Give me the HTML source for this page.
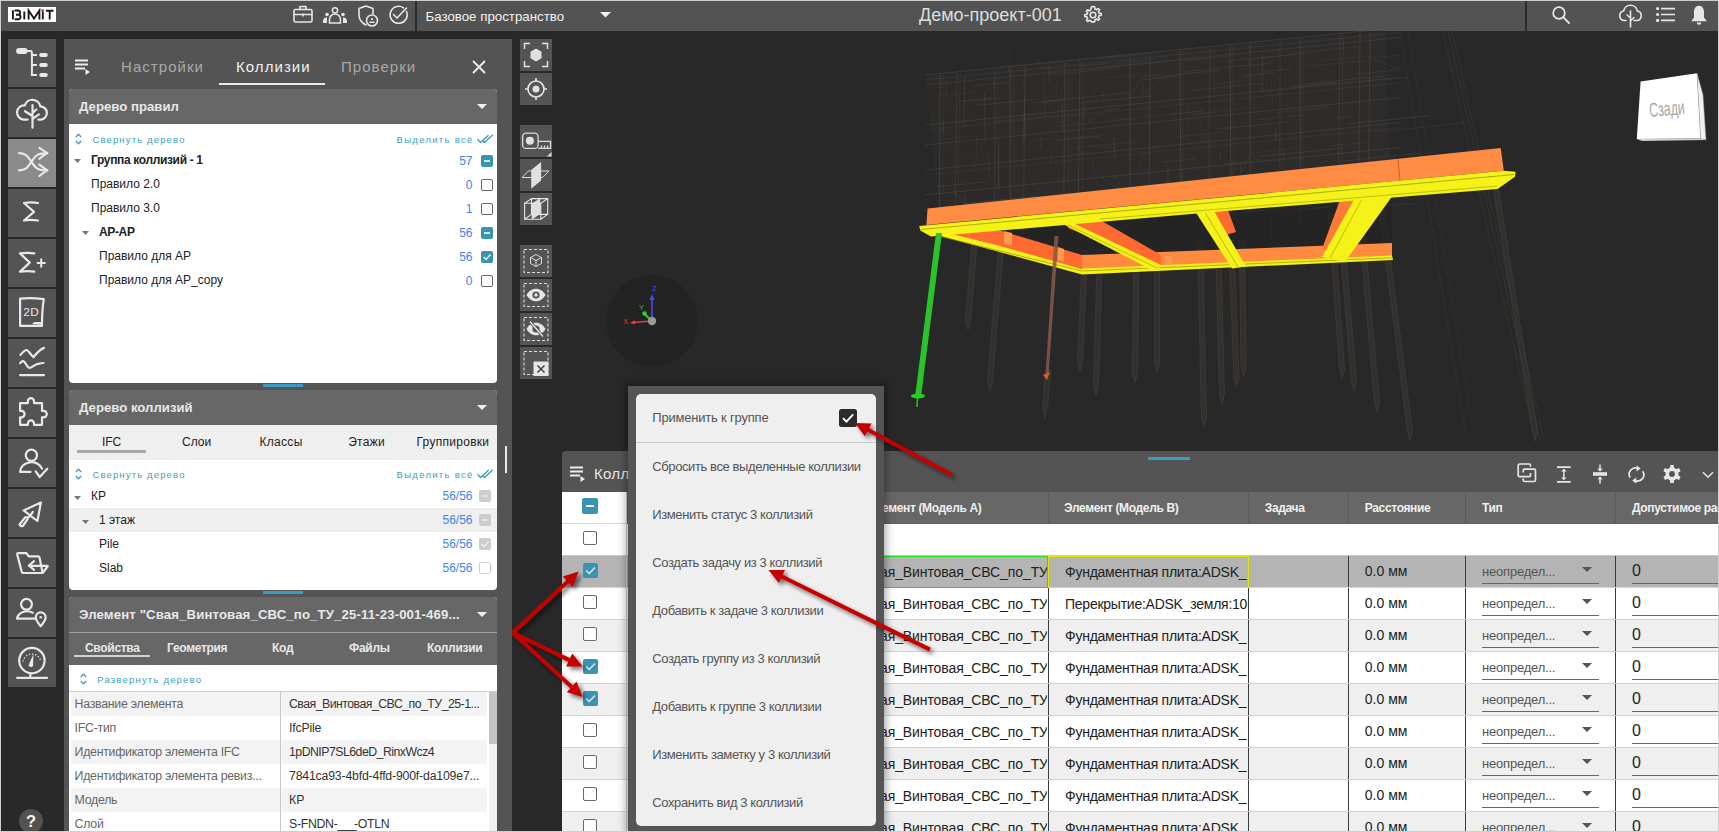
<!DOCTYPE html><html><head><meta charset="utf-8"><style>
html,body{margin:0;padding:0;}
body{width:1719px;height:832px;position:relative;overflow:hidden;background:#282828;font-family:"Liberation Sans",sans-serif;}
.t{position:absolute;white-space:nowrap;font-family:"Liberation Sans",sans-serif;}
svg{overflow:visible}
</style></head><body>
<div style="position:absolute;left:0px;top:0px;width:1719px;height:31px;background:#535353;"></div>
<div style="position:absolute;left:8px;top:7px;width:48px;height:15px;background:#fff;"></div>
<svg style="position:absolute;left:8px;top:7px;" width="48" height="15" viewBox="0 0 48 15"><g stroke="#1a1a1a" stroke-width="1.9" fill="none"><path d="M4.9 3.2V12.4"/><path d="M6.6 3.5H10.5A2.2 2.2 0 0 1 10.5 7.8H8M10.8 7.8A2.3 2.3 0 0 1 10.8 12.3H6.6"/><path d="M16.3 4.5V12.4"/><path d="M20.6 12.4V3.5L26 11.5L31.4 3.5V12.4"/><path d="M34.8 4.6V12.4"/><path d="M38 3.7H45.5M41.7 3.7V12.4"/></g><rect x="33.4" y="2.4" width="2.4" height="2.2" fill="#ee0000"/></svg>
<svg style="position:absolute;left:293px;top:5px;" width="20" height="18" viewBox="0 0 20 18"><rect x="1" y="4.5" width="18" height="12.5" rx="1.5" stroke="#e6e6e6" fill="none" stroke-width="1.6" stroke-linecap="round" stroke-linejoin="round"/><path d="M7 4.5V1.5h6v3M1 9.5h18M10 9v2" stroke="#e6e6e6" fill="none" stroke-width="1.6" stroke-linecap="round" stroke-linejoin="round"/></svg>
<svg style="position:absolute;left:323px;top:7px;" width="24" height="16" viewBox="0 0 24 16"><circle cx="12" cy="3.3" r="2.6" stroke="#e6e6e6" stroke-width="1.5" fill="none"/><circle cx="4" cy="7.5" r="1.8" fill="#e6e6e6"/><circle cx="20" cy="7.5" r="1.8" fill="#e6e6e6"/><path d="M6.5 16v-3.5a5.5 5.5 0 0 1 11 0V16z" stroke="#e6e6e6" stroke-width="1.5" fill="none"/><path d="M0 16v-2a3.5 3.5 0 0 1 4-3.5V16zM24 16v-2a3.5 3.5 0 0 0-4-3.5V16z" fill="#e6e6e6"/></svg>
<svg style="position:absolute;left:357px;top:5px;" width="22" height="22" viewBox="0 0 22 22"><path d="M9 1 L16 3.5 V9 M9 1 L2 3.5 V10 C2 15 5 18 9 20" stroke="#e6e6e6" fill="none" stroke-width="1.6" stroke-linecap="round" stroke-linejoin="round"/><circle cx="15" cy="15.5" r="5.5" stroke="#e6e6e6" fill="none" stroke-width="1.6" stroke-linecap="round" stroke-linejoin="round"/><circle cx="15" cy="14" r="1.1" fill="#e6e6e6"/><path d="M13 17.2h4" stroke="#e6e6e6" fill="none" stroke-width="1.6" stroke-linecap="round" stroke-linejoin="round"/></svg>
<svg style="position:absolute;left:389px;top:5px;" width="20" height="20" viewBox="0 0 20 20"><path d="M17.5 6.5 A8.5 8.5 0 1 1 14.5 2.8" stroke="#e6e6e6" fill="none" stroke-width="1.6" stroke-linecap="round" stroke-linejoin="round"/><path d="M4.5 9.5 L8 13 L17.5 3" stroke="#e6e6e6" fill="none" stroke-width="1.6" stroke-linecap="round" stroke-linejoin="round"/></svg>
<div style="position:absolute;left:415px;top:1px;width:2px;height:30px;background:#2a2a2a;"></div>
<div class="t" style="left:425.5px;top:10.24px;font-size:13.3px;line-height:13.3px;color:#f2f2f2;font-weight:400;letter-spacing:0px;">Базовое пространство</div>
<svg style="position:absolute;left:600px;top:12px;" width="11" height="6" viewBox="0 0 11 6"><path d="M0 0h11L5.5 5.5z" fill="#f2f2f2"/></svg>
<div class="t" style="left:919px;top:5.96px;font-size:18px;line-height:18px;color:#dedede;font-weight:400;letter-spacing:0px;">Демо-проект-001</div>
<svg style="position:absolute;left:1083px;top:5px;" width="20" height="20" viewBox="0 0 20 20"><path d="M10 1.5l1.6.3.4 2.2 1.5.7 1.9-1.2 1.2 1.2-1.2 1.9.7 1.5 2.2.4v1.7l-2.2.4-.7 1.5 1.2 1.9-1.2 1.2-1.9-1.2-1.5.7-.4 2.2H8.4L8 16l-1.5-.7-1.9 1.2-1.2-1.2 1.2-1.9-.7-1.5-2.2-.4V9.8l2.2-.4.7-1.5-1.2-1.9 1.2-1.2 1.9 1.2L8 4.2l.4-2.2z" fill="none" stroke="#e6e6e6" stroke-width="1.6" stroke-linejoin="round"/><circle cx="10" cy="10" r="2.8" fill="none" stroke="#e6e6e6" stroke-width="1.6"/></svg>
<div style="position:absolute;left:1525px;top:1px;width:2px;height:30px;background:#2a2a2a;"></div>
<svg style="position:absolute;left:1552px;top:6px;" width="18" height="18" viewBox="0 0 18 18"><circle cx="7" cy="7" r="5.8" stroke="#e6e6e6" stroke-width="1.8" fill="none"/><path d="M11.2 11.2 L17 17" stroke="#e6e6e6" stroke-width="1.8" stroke-linecap="round"/></svg>
<svg style="position:absolute;left:1619px;top:3px;" width="24" height="24" viewBox="0 0 24 24"><path d="M7 17.5 H5.5 A4.8 4.8 0 0 1 4.6 8 A7 7 0 0 1 18.4 8 A4.8 4.8 0 0 1 17.5 17.5 H15" stroke="#e6e6e6" fill="none" stroke-width="1.6" stroke-linecap="round" stroke-linejoin="round"/><path d="M11.5 8 V24 M11.5 15 L8 12 M11.5 18 L15 14.5" stroke="#e6e6e6" fill="none" stroke-width="1.6" stroke-linecap="round" stroke-linejoin="round"/></svg>
<svg style="position:absolute;left:1656px;top:7px;" width="19" height="15" viewBox="0 0 19 15"><circle cx="1.6" cy="1.6" r="1.6" fill="#e6e6e6"/><circle cx="1.6" cy="7.5" r="1.6" fill="#e6e6e6"/><circle cx="1.6" cy="13.4" r="1.6" fill="#e6e6e6"/><path d="M5 1.6h14M5 7.5h14M5 13.4h14" stroke="#e6e6e6" stroke-width="1.6"/></svg>
<svg style="position:absolute;left:1691px;top:5px;" width="16" height="20" viewBox="0 0 16 20"><path d="M8 0.8 C11.5 0.8 13 4 13 7 V12.5 L15.8 16.2 H0.2 L3 12.5 V7 C3 4 4.5 0.8 8 0.8z" fill="#e6e6e6"/><path d="M5.8 17.5 a2.2 2.2 0 0 0 4.4 0z" fill="#e6e6e6"/></svg>
<div style="position:absolute;left:0px;top:0px;width:1719px;height:1px;background:#cfcfcf;"></div>
<div style="position:absolute;left:8px;top:39px;width:48px;height:48px;background:#545454;"></div>
<svg style="position:absolute;left:8px;top:39px;" width="48" height="48" viewBox="0 0 48 48"><rect x="8.1" y="8.9" width="11.5" height="6.1" rx="3" fill="#e8e8e8"/><path d="M19 11.9h3.5a1.4 1.4 0 0 1 1.4 1.4V36.1h5M23.9 15.9h5M23.9 26h5" stroke="#e8e8e8" stroke-width="2" fill="none"/><rect x="31.2" y="13.9" width="8.6" height="4" rx="2" fill="#e8e8e8"/><rect x="31.2" y="24" width="8.6" height="4" rx="2" fill="#e8e8e8"/><rect x="31.2" y="34.1" width="8.6" height="4" rx="2" fill="#e8e8e8"/></svg>
<div style="position:absolute;left:8px;top:89px;width:48px;height:48px;background:#545454;"></div>
<svg style="position:absolute;left:8px;top:89px;" width="48" height="48" viewBox="0 0 48 48"><path d="M19.6 30.6 H15.5 A7 7 0 0 1 16.8 16.4 A8 8 0 0 1 32.3 17.3 A6.7 6.7 0 0 1 33.3 30.6 H30.3" stroke="#e8e8e8" fill="none" stroke-width="2.2" stroke-linecap="round" stroke-linejoin="round"/><path d="M24.5 16.2 V38.7 M17 22.2 L24.5 27 M24.5 24 L28.3 20.5 M24.5 30 L30.9 25.4" stroke="#e8e8e8" fill="none" stroke-width="2.2" stroke-linecap="round" stroke-linejoin="round"/></svg>
<div style="position:absolute;left:8px;top:139px;width:48px;height:48px;background:#8a8a8a;"></div>
<svg style="position:absolute;left:8px;top:139px;" width="48" height="48" viewBox="0 0 48 48"><path d="M11 14.1 C18 14.1 19.5 17 23.4 22.8 C27.3 28.6 29 31.4 39.3 31.4 M11 31.4 C18 31.4 19.5 28.6 23.4 22.8 C27.3 17 29 14.1 39.3 14.1 M31.4 8.9 Q35.5 12 39.5 14.1 Q35.5 16 31.4 19.8 M31.4 25.7 Q35.5 29 39.5 31.4 Q35.5 33.5 31.4 37" stroke="#e8e8e8" fill="none" stroke-width="2.2" stroke-linecap="round" stroke-linejoin="round"/></svg>
<div style="position:absolute;left:8px;top:189px;width:48px;height:48px;background:#545454;"></div>
<svg style="position:absolute;left:8px;top:189px;" width="48" height="48" viewBox="0 0 48 48"><path d="M16 14 Q23 12.9 30 14 M16 14 L26 22.8 L16 31.5 M16 31.5 Q23 30.4 30 31.5" stroke="#e8e8e8" fill="none" stroke-width="2.2" stroke-linecap="round" stroke-linejoin="round" stroke-width="3"/></svg>
<div style="position:absolute;left:8px;top:239px;width:48px;height:48px;background:#545454;"></div>
<svg style="position:absolute;left:8px;top:239px;" width="48" height="48" viewBox="0 0 48 48"><path d="M12 14.4 Q19.2 13.3 26.3 14.4 M12 14.4 L21.8 23.6 L12 32.6 M12 32.6 Q19.2 31.5 26.3 32.6" stroke="#e8e8e8" fill="none" stroke-width="2.2" stroke-linecap="round" stroke-linejoin="round" stroke-width="3"/><path d="M28.8 23.9h8.8M33.2 19.6v8.8" stroke="#e8e8e8" stroke-width="2" fill="none"/></svg>
<div style="position:absolute;left:8px;top:289px;width:48px;height:48px;background:#545454;"></div>
<svg style="position:absolute;left:8px;top:289px;" width="48" height="48" viewBox="0 0 48 48"><path d="M12.1 9.6 Q24 8.4 35.8 10.2 Q34 20 34 36.8 H12.1 Z" stroke="#e8e8e8" fill="none" stroke-width="2.2" stroke-linecap="round" stroke-linejoin="round"/><path d="M24.3 35.2 Q25 33 27 33 H33.5 V35.8 Z" fill="#e8e8e8"/><text x="23.2" y="26.8" font-family="Liberation Sans" font-size="11.8" fill="#e8e8e8" text-anchor="middle" letter-spacing="0.3">2D</text></svg>
<div style="position:absolute;left:8px;top:339px;width:48px;height:48px;background:#545454;"></div>
<svg style="position:absolute;left:8px;top:339px;" width="48" height="48" viewBox="0 0 48 48"><path d="M12.4 15.9 C15 13 17 11 18.5 11 C20 11 23 16 25.4 18.2 C28 15 32 10 36.1 8.9 M12.1 24.2 C13 23 14 22.2 15.3 22.2 C17 22.2 19.5 28.9 21.3 28.9 C23.5 28.9 27 25.2 30 24.8 C32 24.4 34 24.1 35.5 24 M12.1 36.1 H36" stroke="#e8e8e8" fill="none" stroke-width="2.2" stroke-linecap="round" stroke-linejoin="round"/></svg>
<div style="position:absolute;left:8px;top:389px;width:48px;height:48px;background:#545454;"></div>
<svg style="position:absolute;left:8px;top:389px;" width="48" height="48" viewBox="0 0 48 48"><path d="M12.1 14.1 H19.9 V12.2 a3.05 3.05 0 0 1 6.1 0 V14.1 H34 V21.9 H35.6 a3.2 3.2 0 0 1 0 6.4 H34 V35.8 H26 V34.4 a3.05 3.05 0 0 0 -6.1 0 V35.8 H12.1 V28.3 H13.4 a3.2 3.2 0 0 0 0 -6.4 H12.1 Z" stroke="#e8e8e8" fill="none" stroke-width="2.2" stroke-linecap="round" stroke-linejoin="round"/></svg>
<div style="position:absolute;left:8px;top:439px;width:48px;height:48px;background:#545454;"></div>
<svg style="position:absolute;left:8px;top:439px;" width="48" height="48" viewBox="0 0 48 48"><circle cx="23.4" cy="16.2" r="5.6" stroke="#e8e8e8" fill="none" stroke-width="2.2" stroke-linecap="round" stroke-linejoin="round"/><path d="M12.1 32.9 A11.3 10 0 0 1 34 29.7 M12.1 32.9 H22.5" stroke="#e8e8e8" fill="none" stroke-width="2.2" stroke-linecap="round" stroke-linejoin="round"/><path d="M27.7 32.3 L31.7 38 L39.3 29.7" stroke="#e8e8e8" fill="none" stroke-width="2.2" stroke-linecap="round" stroke-linejoin="round" stroke-width="3.2"/></svg>
<div style="position:absolute;left:8px;top:489px;width:48px;height:48px;background:#545454;"></div>
<svg style="position:absolute;left:8px;top:489px;" width="48" height="48" viewBox="0 0 48 48"><path d="M15.6 21.4 L32.9 13.6 L29.4 32 Z M24.8 22.8 L21.9 27.1 Q20 28.8 17.3 28.3 L11.5 35.5 A2.4 2.4 0 0 0 14.8 37 L19.8 29.8" stroke="#e8e8e8" fill="none" stroke-width="2.2" stroke-linecap="round" stroke-linejoin="round" stroke-width="2"/></svg>
<div style="position:absolute;left:8px;top:539px;width:48px;height:48px;background:#545454;"></div>
<svg style="position:absolute;left:8px;top:539px;" width="48" height="48" viewBox="0 0 48 48"><path d="M10 14.1 H18.3 L20.8 17.4 H30.4 Q31 17.5 31.5 18.5 L34.6 33.8 M10 14.1 Q9 14.3 9.2 15.5 L13.8 33 Q14.3 34 15.3 34 H34.6 L39.6 27.5 Q40 26.8 39 26.8 H21" stroke="#e8e8e8" fill="none" stroke-width="2.2" stroke-linecap="round" stroke-linejoin="round"/><path d="M26 22.2 L21 26.5 L26 30.9" stroke="#e8e8e8" fill="none" stroke-width="2.2" stroke-linecap="round" stroke-linejoin="round"/></svg>
<div style="position:absolute;left:8px;top:589px;width:48px;height:48px;background:#545454;"></div>
<svg style="position:absolute;left:8px;top:589px;" width="48" height="48" viewBox="0 0 48 48"><circle cx="18.5" cy="15.3" r="5.4" stroke="#e8e8e8" fill="none" stroke-width="2.2" stroke-linecap="round" stroke-linejoin="round"/><path d="M8.9 29.7 A10.5 9 0 0 1 24.8 23.7 M8.9 29.7 H27" stroke="#e8e8e8" fill="none" stroke-width="2.2" stroke-linecap="round" stroke-linejoin="round"/><path d="M32.7 37.2 C29.5 33.5 27.8 31 27.8 28.3 A4.9 4.9 0 0 1 37.6 28.3 C37.6 31 35.9 33.5 32.7 37.2 Z" stroke="#e8e8e8" fill="none" stroke-width="2.2" stroke-linecap="round" stroke-linejoin="round"/><circle cx="32.7" cy="28.2" r="1.3" fill="#e8e8e8"/></svg>
<div style="position:absolute;left:8px;top:639px;width:48px;height:48px;background:#545454;"></div>
<svg style="position:absolute;left:8px;top:639px;" width="48" height="48" viewBox="0 0 48 48"><circle cx="23.9" cy="21.6" r="12.7" stroke="#e8e8e8" fill="none" stroke-width="2.2" stroke-linecap="round" stroke-linejoin="round"/><path d="M9.2 38.9 H39 M22.3 34 V38.5" stroke="#e8e8e8" fill="none" stroke-width="2.2" stroke-linecap="round" stroke-linejoin="round"/><path d="M25.4 15.3 L20.6 26 A2.4 2.4 0 0 0 25.1 26.8 Z" fill="#e8e8e8"/><path d="M15.1 22.5 A9 9 0 0 1 32.6 21.5" stroke="#e8e8e8" stroke-width="1.2" stroke-dasharray="1.3 1.8" fill="none"/></svg>
<div style="position:absolute;left:19px;top:809px;width:24px;height:24px;border-radius:12px;background:#525252"></div>
<div class="t" style="left:21.0px;width:20px;text-align:center;top:813.03px;font-size:16.5px;line-height:16.5px;color:#f4f4f4;font-weight:700;letter-spacing:0px;">?</div>
<div style="position:absolute;left:64px;top:39px;width:448px;height:793px;background:#545454;"></div>
<svg style="position:absolute;left:74px;top:59px;" width="20" height="16" viewBox="0 0 20 16"><path d="M1 1.5h13M1 5.5h13M1 9.5h10" stroke="#ececec" stroke-width="1.8"/><path d="M11.5 10v6l4.5-3z" fill="#ececec"/></svg>
<div class="t" style="left:121px;top:59.30px;font-size:15px;line-height:15px;color:#a9a9a9;font-weight:400;letter-spacing:1.05px;">Настройки</div>
<div class="t" style="left:236px;top:59.30px;font-size:15px;line-height:15px;color:#f0f0f0;font-weight:400;letter-spacing:1.05px;">Коллизии</div>
<div class="t" style="left:341px;top:59.30px;font-size:15px;line-height:15px;color:#a9a9a9;font-weight:400;letter-spacing:1.05px;">Проверки</div>
<div style="position:absolute;left:219px;top:83px;width:106px;height:2px;background:#e8e8e8;"></div>
<svg style="position:absolute;left:472px;top:60px;" width="14" height="14" viewBox="0 0 14 14"><path d="M1 1L13 13M13 1L1 13" stroke="#f0f0f0" stroke-width="1.8"/></svg>
<div style="position:absolute;left:69px;top:89px;width:428px;height:294px;border-radius:4px;background:#fff;overflow:hidden"></div>
<div style="position:absolute;left:69px;top:89px;width:428px;height:35px;border-radius:4px 4px 0 0;background:#676767"></div>
<div class="t" style="left:79px;top:99.53px;font-size:13.2px;line-height:13.2px;color:#e8e8e8;font-weight:700;letter-spacing:0px;">Дерево правил</div>
<svg style="position:absolute;left:477px;top:104px;" width="10" height="5" viewBox="0 0 10 5"><path d="M0 0h10L5.0 5z" fill="#f0f0f0"/></svg>
<svg style="position:absolute;left:75px;top:133px;" width="7" height="12" viewBox="0 0 7 12"><path d="M0.8 4L3.5 1.2 6.2 4M0.8 8L3.5 10.8 6.2 8" stroke="#3d9ec4" stroke-width="1.3" fill="none"/></svg>
<div class="t" style="left:92.4px;top:134.96px;font-size:9.5px;line-height:9.5px;color:#3d9ec4;font-weight:400;letter-spacing:1.15px;">Свернуть дерево</div>
<div class="t" style="left:273.6px;width:200px;text-align:right;top:134.96px;font-size:9.5px;line-height:9.5px;color:#3d9ec4;font-weight:400;letter-spacing:1.3px;">Выделить всё</div>
<svg style="position:absolute;left:476px;top:133px;" width="18" height="10" viewBox="0 0 18 10"><path d="M1.5 6.3L4.5 9.5 12.5 2.2M6 7.3L8.3 9.5 16.8 1.8" stroke="#3d9ec4" stroke-width="1.4" fill="none"/></svg>
<svg style="position:absolute;left:74px;top:158.9px;" width="7" height="4" viewBox="0 0 7 4"><path d="M0 0h7L3.5 4z" fill="#777"/></svg>
<div class="t" style="left:91px;top:154.04px;font-size:12px;line-height:12px;color:#222;font-weight:700;letter-spacing:-0.35px;">Группа коллизий - 1</div>
<div class="t" style="left:372.5px;width:100px;text-align:right;top:154.54px;font-size:12px;line-height:12px;color:#4282f2;font-weight:400;letter-spacing:0px;">57</div>
<div style="position:absolute;left:481px;top:154.9px;width:12px;height:12px;border-radius:2px;background:#3a93b0"></div>
<div style="position:absolute;left:484px;top:159.9px;width:6px;height:2px;background:#d8e8ee;"></div>
<div class="t" style="left:91px;top:178.04px;font-size:12px;line-height:12px;color:#222;font-weight:400;letter-spacing:0px;">Правило 2.0</div>
<div class="t" style="left:372.5px;width:100px;text-align:right;top:178.54px;font-size:12px;line-height:12px;color:#4282f2;font-weight:400;letter-spacing:0px;">0</div>
<div style="position:absolute;left:481px;top:178.9px;width:10px;height:10px;border-radius:2px;border:1px solid #666;background:#fff"></div>
<div class="t" style="left:91px;top:202.04px;font-size:12px;line-height:12px;color:#222;font-weight:400;letter-spacing:0px;">Правило 3.0</div>
<div class="t" style="left:372.5px;width:100px;text-align:right;top:202.54px;font-size:12px;line-height:12px;color:#4282f2;font-weight:400;letter-spacing:0px;">1</div>
<div style="position:absolute;left:481px;top:202.9px;width:10px;height:10px;border-radius:2px;border:1px solid #666;background:#fff"></div>
<svg style="position:absolute;left:82px;top:230.9px;" width="7" height="4" viewBox="0 0 7 4"><path d="M0 0h7L3.5 4z" fill="#777"/></svg>
<div class="t" style="left:99px;top:226.04px;font-size:12px;line-height:12px;color:#222;font-weight:700;letter-spacing:-0.35px;">АР-АР</div>
<div class="t" style="left:372.5px;width:100px;text-align:right;top:226.54px;font-size:12px;line-height:12px;color:#4282f2;font-weight:400;letter-spacing:0px;">56</div>
<div style="position:absolute;left:481px;top:226.9px;width:12px;height:12px;border-radius:2px;background:#3a93b0"></div>
<div style="position:absolute;left:484px;top:231.9px;width:6px;height:2px;background:#d8e8ee;"></div>
<div class="t" style="left:99px;top:250.04px;font-size:12px;line-height:12px;color:#222;font-weight:400;letter-spacing:0px;">Правило для АР</div>
<div class="t" style="left:372.5px;width:100px;text-align:right;top:250.54px;font-size:12px;line-height:12px;color:#4282f2;font-weight:400;letter-spacing:0px;">56</div>
<div style="position:absolute;left:481px;top:250.89999999999998px;width:12px;height:12px;border-radius:2px;background:#3a93b0"></div>
<svg style="position:absolute;left:481px;top:250.89999999999998px;" width="12" height="12" viewBox="0 0 12 12"><path d="M2.64 6.0L5.04 8.399999999999999L9.600000000000001 3.5999999999999996" stroke="#e8f2f5" stroke-width="1.5" fill="none"/></svg>
<div class="t" style="left:99px;top:274.04px;font-size:12px;line-height:12px;color:#222;font-weight:400;letter-spacing:0px;">Правило для АР_copy</div>
<div class="t" style="left:372.5px;width:100px;text-align:right;top:274.54px;font-size:12px;line-height:12px;color:#4282f2;font-weight:400;letter-spacing:0px;">0</div>
<div style="position:absolute;left:481px;top:274.9px;width:10px;height:10px;border-radius:2px;border:1px solid #666;background:#fff"></div>
<div style="position:absolute;left:263px;top:384px;width:40px;height:3px;background:#3a9cc0;"></div>
<div style="position:absolute;left:69px;top:390px;width:428px;height:200px;border-radius:4px;background:#fff;overflow:hidden"></div>
<div style="position:absolute;left:69px;top:390px;width:428px;height:35px;border-radius:4px 4px 0 0;background:#676767"></div>
<div class="t" style="left:79px;top:400.53px;font-size:13.2px;line-height:13.2px;color:#e8e8e8;font-weight:700;letter-spacing:0px;">Дерево коллизий</div>
<svg style="position:absolute;left:477px;top:405px;" width="10" height="5" viewBox="0 0 10 5"><path d="M0 0h10L5.0 5z" fill="#f0f0f0"/></svg>
<div style="position:absolute;left:69px;top:425px;width:428px;height:35px;background:#efefef;"></div>
<div class="t" style="left:101.9px;top:435.84px;font-size:12px;line-height:12px;color:#222;font-weight:400;letter-spacing:0px;">IFC</div>
<div class="t" style="left:182px;top:435.84px;font-size:12px;line-height:12px;color:#222;font-weight:400;letter-spacing:0px;">Слои</div>
<div class="t" style="left:259.5px;top:435.84px;font-size:12px;line-height:12px;color:#222;font-weight:400;letter-spacing:0.3px;">Классы</div>
<div class="t" style="left:348.2px;top:435.84px;font-size:12px;line-height:12px;color:#222;font-weight:400;letter-spacing:0.3px;">Этажи</div>
<div class="t" style="left:416.5px;top:435.84px;font-size:12px;line-height:12px;color:#222;font-weight:400;letter-spacing:0.28px;">Группировки</div>
<div style="position:absolute;left:77px;top:450px;width:69px;height:2.5px;background:#a8a8a8;"></div>
<svg style="position:absolute;left:75px;top:468px;" width="7" height="12" viewBox="0 0 7 12"><path d="M0.8 4L3.5 1.2 6.2 4M0.8 8L3.5 10.8 6.2 8" stroke="#3d9ec4" stroke-width="1.3" fill="none"/></svg>
<div class="t" style="left:92.4px;top:469.96px;font-size:9.5px;line-height:9.5px;color:#3d9ec4;font-weight:400;letter-spacing:1.15px;">Свернуть дерево</div>
<div class="t" style="left:273.6px;width:200px;text-align:right;top:469.96px;font-size:9.5px;line-height:9.5px;color:#3d9ec4;font-weight:400;letter-spacing:1.3px;">Выделить всё</div>
<svg style="position:absolute;left:476px;top:468px;" width="18" height="10" viewBox="0 0 18 10"><path d="M1.5 6.3L4.5 9.5 12.5 2.2M6 7.3L8.3 9.5 16.8 1.8" stroke="#3d9ec4" stroke-width="1.4" fill="none"/></svg>
<div style="position:absolute;left:69px;top:508px;width:428px;height:24px;background:#efefef;"></div>
<svg style="position:absolute;left:74px;top:495.5px;" width="7" height="4" viewBox="0 0 7 4"><path d="M0 0h7L3.5 4z" fill="#777"/></svg>
<div class="t" style="left:91px;top:489.84px;font-size:12px;line-height:12px;color:#222;font-weight:400;letter-spacing:0px;">КР</div>
<div class="t" style="left:372.5px;width:100px;text-align:right;top:490.34px;font-size:12px;line-height:12px;color:#4282f2;font-weight:400;letter-spacing:0px;">56/56</div>
<div style="position:absolute;left:479px;top:490px;width:12px;height:12px;border-radius:2px;background:#cdcdcd"></div>
<div style="position:absolute;left:482px;top:495.0px;width:6px;height:2px;background:#d8e8ee;"></div>
<svg style="position:absolute;left:82px;top:519.5px;" width="7" height="4" viewBox="0 0 7 4"><path d="M0 0h7L3.5 4z" fill="#777"/></svg>
<div class="t" style="left:99px;top:513.84px;font-size:12px;line-height:12px;color:#222;font-weight:400;letter-spacing:0px;">1 этаж</div>
<div class="t" style="left:372.5px;width:100px;text-align:right;top:514.34px;font-size:12px;line-height:12px;color:#4282f2;font-weight:400;letter-spacing:0px;">56/56</div>
<div style="position:absolute;left:479px;top:514px;width:12px;height:12px;border-radius:2px;background:#cdcdcd"></div>
<div style="position:absolute;left:482px;top:519.0px;width:6px;height:2px;background:#d8e8ee;"></div>
<div class="t" style="left:99px;top:537.84px;font-size:12px;line-height:12px;color:#222;font-weight:400;letter-spacing:0px;">Pile</div>
<div class="t" style="left:372.5px;width:100px;text-align:right;top:538.34px;font-size:12px;line-height:12px;color:#4282f2;font-weight:400;letter-spacing:0px;">56/56</div>
<div style="position:absolute;left:479px;top:538px;width:12px;height:12px;border-radius:2px;background:#cdcdcd"></div>
<svg style="position:absolute;left:479px;top:538px;" width="12" height="12" viewBox="0 0 12 12"><path d="M2.64 6.0L5.04 8.399999999999999L9.600000000000001 3.5999999999999996" stroke="#e8f2f5" stroke-width="1.5" fill="none"/></svg>
<div class="t" style="left:99px;top:561.84px;font-size:12px;line-height:12px;color:#222;font-weight:400;letter-spacing:0px;">Slab</div>
<div class="t" style="left:372.5px;width:100px;text-align:right;top:562.34px;font-size:12px;line-height:12px;color:#4282f2;font-weight:400;letter-spacing:0px;">56/56</div>
<div style="position:absolute;left:479px;top:562px;width:10px;height:10px;border-radius:2px;border:1px solid #cdcdcd;background:#fff"></div>
<div style="position:absolute;left:263px;top:591px;width:40px;height:3px;background:#3a9cc0;"></div>
<div style="position:absolute;left:69px;top:597px;width:428px;height:240px;border-radius:4px 4px 0 0;background:#fff;overflow:hidden"></div>
<div style="position:absolute;left:69px;top:597px;width:428px;height:68px;border-radius:4px 4px 0 0;background:#676767"></div>
<div style="position:absolute;left:69px;top:632px;width:428px;height:1px;background:#a0a0a0;"></div>
<div class="t" style="left:79px;top:608.03px;font-size:13.2px;line-height:13.2px;color:#e8e8e8;font-weight:700;letter-spacing:0.13px;">Элемент "Свая_Винтовая_СВС_по_ТУ_25-11-23-001-469...</div>
<svg style="position:absolute;left:477px;top:612px;" width="10" height="5" viewBox="0 0 10 5"><path d="M0 0h10L5.0 5z" fill="#f0f0f0"/></svg>
<div class="t" style="left:85px;top:641.84px;font-size:12px;line-height:12px;color:#e8e8e8;font-weight:700;letter-spacing:-0.3px;">Свойства</div>
<div class="t" style="left:167px;top:641.84px;font-size:12px;line-height:12px;color:#e8e8e8;font-weight:700;letter-spacing:-0.3px;">Геометрия</div>
<div class="t" style="left:272px;top:641.84px;font-size:12px;line-height:12px;color:#e8e8e8;font-weight:700;letter-spacing:-0.3px;">Код</div>
<div class="t" style="left:349px;top:641.84px;font-size:12px;line-height:12px;color:#e8e8e8;font-weight:700;letter-spacing:-0.3px;">Файлы</div>
<div class="t" style="left:427px;top:641.84px;font-size:12px;line-height:12px;color:#e8e8e8;font-weight:700;letter-spacing:-0.3px;">Коллизии</div>
<div style="position:absolute;left:74px;top:655px;width:76px;height:2px;background:#d0d0d0;"></div>
<svg style="position:absolute;left:80px;top:673px;" width="7" height="12" viewBox="0 0 7 12"><path d="M0.8 4L3.5 1.2 6.2 4M0.8 8L3.5 10.8 6.2 8" stroke="#3d9ec4" stroke-width="1.3" fill="none"/></svg>
<div class="t" style="left:97.2px;top:675.36px;font-size:9.5px;line-height:9.5px;color:#3d9ec4;font-weight:400;letter-spacing:1.2px;">Развернуть дерево</div>
<div style="position:absolute;left:69px;top:691px;width:428px;height:1px;background:#cfcfcf;"></div>
<div style="position:absolute;left:71px;top:692px;width:416px;height:24px;background:#f3f3f3;"></div>
<div class="t" style="left:74.6px;top:697.59px;font-size:12.3px;line-height:12.3px;color:#666;font-weight:400;letter-spacing:-0.25px;">Название элемента</div>
<div class="t" style="left:289px;top:697.59px;font-size:12.3px;line-height:12.3px;color:#333;font-weight:400;letter-spacing:-0.52px;">Свая_Винтовая_СВС_по_ТУ_25-1...</div>
<div class="t" style="left:74.6px;top:721.59px;font-size:12.3px;line-height:12.3px;color:#666;font-weight:400;letter-spacing:-0.25px;">IFC-тип</div>
<div class="t" style="left:289px;top:721.59px;font-size:12.3px;line-height:12.3px;color:#333;font-weight:400;letter-spacing:-0.2px;">IfcPile</div>
<div style="position:absolute;left:71px;top:740px;width:416px;height:24px;background:#f3f3f3;"></div>
<div class="t" style="left:74.6px;top:745.59px;font-size:12.3px;line-height:12.3px;color:#666;font-weight:400;letter-spacing:-0.25px;">Идентификатор элемента IFC</div>
<div class="t" style="left:289px;top:745.59px;font-size:12.3px;line-height:12.3px;color:#333;font-weight:400;letter-spacing:-0.52px;">1pDNIP7SL6deD_RinxWcz4</div>
<div class="t" style="left:74.6px;top:769.59px;font-size:12.3px;line-height:12.3px;color:#666;font-weight:400;letter-spacing:-0.25px;">Идентификатор элемента ревиз...</div>
<div class="t" style="left:289px;top:769.59px;font-size:12.3px;line-height:12.3px;color:#333;font-weight:400;letter-spacing:-0.19px;">7841ca93-4bfd-4ffd-900f-da109e7...</div>
<div style="position:absolute;left:71px;top:788px;width:416px;height:24px;background:#f3f3f3;"></div>
<div class="t" style="left:74.6px;top:793.59px;font-size:12.3px;line-height:12.3px;color:#666;font-weight:400;letter-spacing:-0.25px;">Модель</div>
<div class="t" style="left:289px;top:793.59px;font-size:12.3px;line-height:12.3px;color:#333;font-weight:400;letter-spacing:0px;">КР</div>
<div class="t" style="left:74.6px;top:817.59px;font-size:12.3px;line-height:12.3px;color:#666;font-weight:400;letter-spacing:-0.25px;">Слой</div>
<div class="t" style="left:289px;top:817.59px;font-size:12.3px;line-height:12.3px;color:#333;font-weight:400;letter-spacing:-0.3px;">S-FNDN-<span style="letter-spacing:-2.7px">____</span>-OTLN</div>
<div style="position:absolute;left:280px;top:692px;width:1px;height:140px;background:#c8c8c8;"></div>
<div style="position:absolute;left:489px;top:692px;width:8px;height:140px;background:#f1f1f1;"></div>
<div style="position:absolute;left:489px;top:692px;width:8px;height:52px;background:#c4c4c4;"></div>
<svg style="position:absolute;left:0;top:0" width="1719" height="832" viewBox="0 0 1719 832"><g><path d="M925 76 L1385 31 L1392 205 L940 222 Z" fill="#2d2c2b" fill-opacity="0.7"/><path d="M1000 65 L1385 31 L1390 190 L1010 215 Z" fill="#302e2c" fill-opacity="0.5"/><path d="M925.0 75.0L1400.0 27.5" stroke="#5a5652" stroke-opacity="0.55" stroke-width="0.8"/><path d="M925.0 80.0L1400.0 32.5" stroke="#5a5652" stroke-opacity="0.3" stroke-width="0.8"/><path d="M925.0 85.0L1400.0 37.5" stroke="#5a5652" stroke-opacity="0.4" stroke-width="0.8"/><path d="M925.0 125.0L1400.0 77.5" stroke="#5a5652" stroke-opacity="0.45" stroke-width="0.8"/><path d="M925.0 130.0L1400.0 82.5" stroke="#5a5652" stroke-opacity="0.25" stroke-width="0.8"/><path d="M925.0 145.0L1400.0 97.5" stroke="#5a5652" stroke-opacity="0.4" stroke-width="0.8"/><path d="M925.0 170.0L1400.0 122.5" stroke="#5a5652" stroke-opacity="0.45" stroke-width="0.8"/><path d="M925.0 175.0L1400.0 127.5" stroke="#5a5652" stroke-opacity="0.25" stroke-width="0.8"/><path d="M925.0 195.0L1400.0 147.5" stroke="#5a5652" stroke-opacity="0.45" stroke-width="0.8"/><path d="M925.0 210.0L1400.0 162.5" stroke="#5a5652" stroke-opacity="0.3" stroke-width="0.8"/><path d="M940.0 74.5L939.3 207.6" stroke="#5a5652" stroke-opacity="0.5127336182599634" stroke-width="0.8"/><path d="M943.0 74.5L943.1 195.4" stroke="#5a5652" stroke-opacity="0.22" stroke-width="0.8"/><path d="M957.0 72.8L955.2 213.6" stroke="#5a5652" stroke-opacity="0.35937391461049617" stroke-width="0.8"/><path d="M960.0 72.8L958.3 183.8" stroke="#5a5652" stroke-opacity="0.22" stroke-width="0.8"/><path d="M995.0 69.0L994.7 219.1" stroke="#5a5652" stroke-opacity="0.38095049028741135" stroke-width="0.8"/><path d="M998.0 69.0L998.5 219.8" stroke="#5a5652" stroke-opacity="0.22" stroke-width="0.8"/><path d="M1010.0 67.5L1010.3 211.7" stroke="#5a5652" stroke-opacity="0.5940637763982299" stroke-width="0.8"/><path d="M1013.0 67.5L1014.4 192.2" stroke="#5a5652" stroke-opacity="0.22" stroke-width="0.8"/><path d="M1025.0 66.0L1023.6 207.0" stroke="#5a5652" stroke-opacity="0.42712045602548354" stroke-width="0.8"/><path d="M1065.0 62.0L1063.7 214.9" stroke="#5a5652" stroke-opacity="0.509728367231546" stroke-width="0.8"/><path d="M1068.0 62.0L1068.2 182.6" stroke="#5a5652" stroke-opacity="0.22" stroke-width="0.8"/><path d="M1080.0 60.5L1078.2 208.5" stroke="#5a5652" stroke-opacity="0.5200999932954464" stroke-width="0.8"/><path d="M1083.0 60.5L1082.3 204.6" stroke="#5a5652" stroke-opacity="0.22" stroke-width="0.8"/><path d="M1130.0 55.5L1129.8 210.1" stroke="#5a5652" stroke-opacity="0.5485948703806227" stroke-width="0.8"/><path d="M1150.0 53.5L1149.0 214.8" stroke="#5a5652" stroke-opacity="0.48129912595286284" stroke-width="0.8"/><path d="M1180.0 50.5L1180.9 209.9" stroke="#5a5652" stroke-opacity="0.5950437118731455" stroke-width="0.8"/><path d="M1183.0 50.5L1182.7 211.8" stroke="#5a5652" stroke-opacity="0.22" stroke-width="0.8"/><path d="M1210.0 47.5L1208.6 213.3" stroke="#5a5652" stroke-opacity="0.3598018142618594" stroke-width="0.8"/><path d="M1230.0 45.5L1231.1 214.7" stroke="#5a5652" stroke-opacity="0.5688694529577221" stroke-width="0.8"/><path d="M1233.0 45.5L1233.8 205.0" stroke="#5a5652" stroke-opacity="0.22" stroke-width="0.8"/><path d="M1250.0 43.5L1250.3 212.8" stroke="#5a5652" stroke-opacity="0.5599919451281353" stroke-width="0.8"/><path d="M1280.0 40.5L1279.9 216.3" stroke="#5a5652" stroke-opacity="0.3651673568993049" stroke-width="0.8"/><path d="M1300.0 38.5L1300.6 221.9" stroke="#5a5652" stroke-opacity="0.5554811966524287" stroke-width="0.8"/><path d="M1303.0 38.5L1302.5 208.1" stroke="#5a5652" stroke-opacity="0.22" stroke-width="0.8"/><path d="M1340.0 34.5L1338.1 212.8" stroke="#5a5652" stroke-opacity="0.3920120947266361" stroke-width="0.8"/><path d="M1343.0 34.5L1341.2 212.3" stroke="#5a5652" stroke-opacity="0.22" stroke-width="0.8"/><path d="M1360.0 32.5L1358.5 209.2" stroke="#5a5652" stroke-opacity="0.4477374257833068" stroke-width="0.8"/><path d="M1370.0 31.5L1368.3 212.6" stroke="#5a5652" stroke-opacity="0.4873599772860093" stroke-width="0.8"/><path d="M1307.8 190.9L1353.9 186.3" stroke="#5a5652" stroke-opacity="0.2896927913329062" stroke-width="0.8"/><path d="M1337.3 207.4L1365.5 204.6" stroke="#5a5652" stroke-opacity="0.25798921670488395" stroke-width="0.8"/><path d="M1041.2 137.4L1040.7 147.6" stroke="#5a5652" stroke-opacity="0.304736625281332" stroke-width="0.8"/><path d="M1103.0 147.0L1116.3 147.9" stroke="#5a5652" stroke-opacity="0.24263891241136915" stroke-width="0.8"/><path d="M1242.7 53.5L1262.3 75.9" stroke="#5a5652" stroke-opacity="0.2696809681794849" stroke-width="0.8"/><path d="M1113.5 120.1L1176.1 113.9" stroke="#5a5652" stroke-opacity="0.2155619554046719" stroke-width="0.8"/><path d="M965.6 101.8L1006.1 97.8" stroke="#5a5652" stroke-opacity="0.21314390097256675" stroke-width="0.8"/><path d="M935.1 96.2L977.4 91.9" stroke="#5a5652" stroke-opacity="0.20637522166653643" stroke-width="0.8"/><path d="M1332.8 145.6L1366.7 142.2" stroke="#5a5652" stroke-opacity="0.2868473865134254" stroke-width="0.8"/><path d="M1100.7 77.7L1135.2 75.6" stroke="#5a5652" stroke-opacity="0.2225751984624404" stroke-width="0.8"/><path d="M974.1 85.8L1008.9 82.3" stroke="#5a5652" stroke-opacity="0.4072138445303901" stroke-width="0.8"/><path d="M1008.5 71.1L1010.4 49.9" stroke="#5a5652" stroke-opacity="0.23147586388231714" stroke-width="0.8"/><path d="M947.3 148.4L972.7 160.1" stroke="#5a5652" stroke-opacity="0.18916727958440427" stroke-width="0.8"/><path d="M1101.8 84.5L1104.1 101.2" stroke="#5a5652" stroke-opacity="0.19944974925716435" stroke-width="0.8"/><path d="M1036.5 186.7L1061.2 205.1" stroke="#5a5652" stroke-opacity="0.27274994149880594" stroke-width="0.8"/><path d="M1271.6 80.7L1271.4 91.9" stroke="#5a5652" stroke-opacity="0.20698426885551613" stroke-width="0.8"/><path d="M1062.1 101.9L1063.0 129.8" stroke="#5a5652" stroke-opacity="0.43425530031906057" stroke-width="0.8"/><path d="M1384.6 206.7L1416.1 203.6" stroke="#5a5652" stroke-opacity="0.256711456682682" stroke-width="0.8"/><path d="M1024.5 96.5L1025.3 140.1" stroke="#5a5652" stroke-opacity="0.3198683565653846" stroke-width="0.8"/><path d="M1232.1 181.0L1296.6 174.5" stroke="#5a5652" stroke-opacity="0.42744428438793075" stroke-width="0.8"/><path d="M1290.9 171.1L1290.3 212.7" stroke="#5a5652" stroke-opacity="0.2831292999661525" stroke-width="0.8"/><path d="M1299.4 210.0L1344.5 205.5" stroke="#5a5652" stroke-opacity="0.43669925161622325" stroke-width="0.8"/><path d="M1264.8 71.4L1291.1 68.8" stroke="#5a5652" stroke-opacity="0.42621302393330984" stroke-width="0.8"/><path d="M1302.0 64.1L1335.6 73.6" stroke="#5a5652" stroke-opacity="0.20256112682362543" stroke-width="0.8"/><path d="M1184.6 71.6L1272.5 62.9" stroke="#5a5652" stroke-opacity="0.36241866741845763" stroke-width="0.8"/><path d="M1174.6 204.1L1255.0 196.1" stroke="#5a5652" stroke-opacity="0.4065388129538053" stroke-width="0.8"/><path d="M1031.0 103.1L1064.1 99.8" stroke="#5a5652" stroke-opacity="0.34660929204149044" stroke-width="0.8"/><path d="M1053.0 126.8L1136.3 118.5" stroke="#5a5652" stroke-opacity="0.2884460059883147" stroke-width="0.8"/><path d="M1143.5 148.0L1137.9 173.0" stroke="#5a5652" stroke-opacity="0.22524734116803471" stroke-width="0.8"/><path d="M1177.0 136.8L1225.0 132.0" stroke="#5a5652" stroke-opacity="0.2457769718180497" stroke-width="0.8"/><path d="M936.8 186.8L987.3 181.8" stroke="#5a5652" stroke-opacity="0.3812983176118445" stroke-width="0.8"/><path d="M1188.2 103.6L1188.3 144.9" stroke="#5a5652" stroke-opacity="0.22652735427623208" stroke-width="0.8"/><path d="M1189.9 90.6L1262.9 83.3" stroke="#5a5652" stroke-opacity="0.32692849794808015" stroke-width="0.8"/><path d="M1190.6 175.3L1186.6 182.0" stroke="#5a5652" stroke-opacity="0.22583296962768323" stroke-width="0.8"/><path d="M1168.0 164.8L1168.1 193.9" stroke="#5a5652" stroke-opacity="0.43537528188462515" stroke-width="0.8"/><path d="M1253.1 193.8L1236.3 197.4" stroke="#5a5652" stroke-opacity="0.2914900551020225" stroke-width="0.8"/><path d="M1317.2 61.2L1365.4 56.4" stroke="#5a5652" stroke-opacity="0.21813652491412208" stroke-width="0.8"/><path d="M1044.5 75.1L1045.1 121.0" stroke="#5a5652" stroke-opacity="0.23861165594217304" stroke-width="0.8"/><path d="M1260.8 156.4L1342.0 148.2" stroke="#5a5652" stroke-opacity="0.441886195666596" stroke-width="0.8"/><path d="M1034.9 207.9L1086.5 202.7" stroke="#5a5652" stroke-opacity="0.4474678636860716" stroke-width="0.8"/><path d="M1313.8 65.8L1367.4 60.5" stroke="#5a5652" stroke-opacity="0.284779036084705" stroke-width="0.8"/><path d="M1024.1 113.5L1023.1 145.7" stroke="#5a5652" stroke-opacity="0.3101145254506755" stroke-width="0.8"/><path d="M943.2 120.9L943.3 133.4" stroke="#5a5652" stroke-opacity="0.44627081103352484" stroke-width="0.8"/><path d="M1293.7 210.0L1328.6 206.5" stroke="#5a5652" stroke-opacity="0.20989704747851692" stroke-width="0.8"/><path d="M1289.4 87.0L1336.1 82.3" stroke="#5a5652" stroke-opacity="0.42785345404590225" stroke-width="0.8"/><path d="M1307.6 83.6L1391.6 75.2" stroke="#5a5652" stroke-opacity="0.3426487313483135" stroke-width="0.8"/><path d="M1253.7 58.5L1320.3 51.8" stroke="#5a5652" stroke-opacity="0.3063292601989307" stroke-width="0.8"/><path d="M967.9 206.2L968.6 219.5" stroke="#5a5652" stroke-opacity="0.4140571590930372" stroke-width="0.8"/><path d="M965.3 195.4L965.0 227.5" stroke="#5a5652" stroke-opacity="0.4316673210178068" stroke-width="0.8"/><path d="M1056.9 82.5L1056.4 96.9" stroke="#5a5652" stroke-opacity="0.24036227289940285" stroke-width="0.8"/><path d="M957.9 101.4L995.8 97.6" stroke="#5a5652" stroke-opacity="0.38987456374964036" stroke-width="0.8"/><path d="M1066.9 138.4L1108.0 134.3" stroke="#5a5652" stroke-opacity="0.20454077682364544" stroke-width="0.8"/><path d="M1049.0 65.9L1049.1 83.5" stroke="#5a5652" stroke-opacity="0.3186901596294335" stroke-width="0.8"/><path d="M1360.3 51.9L1355.5 51.6" stroke="#5a5652" stroke-opacity="0.2751920899995334" stroke-width="0.8"/><path d="M1113.9 137.1L1114.8 160.8" stroke="#5a5652" stroke-opacity="0.4080716358161124" stroke-width="0.8"/><path d="M1256.6 152.3L1297.6 148.2" stroke="#5a5652" stroke-opacity="0.21359713419710907" stroke-width="0.8"/><path d="M994.1 79.4L993.6 95.9" stroke="#5a5652" stroke-opacity="0.2211212181769827" stroke-width="0.8"/><path d="M1317.8 191.9L1317.3 211.6" stroke="#5a5652" stroke-opacity="0.2732646231450839" stroke-width="0.8"/><path d="M1144.1 79.4L1178.8 76.0" stroke="#5a5652" stroke-opacity="0.44044663334065337" stroke-width="0.8"/><path d="M1377.5 131.7L1465.0 122.9" stroke="#5a5652" stroke-opacity="0.2773869794194882" stroke-width="0.8"/><path d="M1097.2 58.9L1147.8 53.9" stroke="#5a5652" stroke-opacity="0.3256910015940999" stroke-width="0.8"/><path d="M1026.4 141.1L1061.3 137.7" stroke="#5a5652" stroke-opacity="0.222438349470245" stroke-width="0.8"/><path d="M1116.8 63.4L1154.6 59.6" stroke="#5a5652" stroke-opacity="0.25820239164770153" stroke-width="0.8"/><path d="M1201.4 136.5L1212.5 149.5" stroke="#5a5652" stroke-opacity="0.28186360403510846" stroke-width="0.8"/><path d="M1112.2 108.7L1087.7 122.2" stroke="#5a5652" stroke-opacity="0.2464829174556794" stroke-width="0.8"/><path d="M954.9 191.6L963.8 205.6" stroke="#5a5652" stroke-opacity="0.2718328373568591" stroke-width="0.8"/><path d="M998.4 145.3L999.1 187.5" stroke="#5a5652" stroke-opacity="0.40660228037549506" stroke-width="0.8"/><path d="M1200.7 197.1L1201.1 216.3" stroke="#5a5652" stroke-opacity="0.20779013157237713" stroke-width="0.8"/><path d="M995.6 121.6L1073.2 113.9" stroke="#5a5652" stroke-opacity="0.3396318116239837" stroke-width="0.8"/><path d="M1220.6 152.0L1220.6 162.1" stroke="#5a5652" stroke-opacity="0.3994243880177132" stroke-width="0.8"/><path d="M1275.5 128.5L1275.8 141.1" stroke="#5a5652" stroke-opacity="0.38419708213556264" stroke-width="0.8"/><path d="M1049.7 74.8L1119.4 67.8" stroke="#5a5652" stroke-opacity="0.2513043817705216" stroke-width="0.8"/><path d="M1271.6 210.8L1271.4 239.9" stroke="#5a5652" stroke-opacity="0.3709241406755879" stroke-width="0.8"/><path d="M1284.0 148.0L1283.1 163.9" stroke="#5a5652" stroke-opacity="0.26348507041397384" stroke-width="0.8"/><path d="M1273.2 94.1L1272.2 106.5" stroke="#5a5652" stroke-opacity="0.267193191447312" stroke-width="0.8"/><path d="M1240.8 162.5L1240.3 193.2" stroke="#5a5652" stroke-opacity="0.31616571334357857" stroke-width="0.8"/><path d="M1147.2 72.9L1126.1 101.6" stroke="#5a5652" stroke-opacity="0.2904381511430575" stroke-width="0.8"/><path d="M943.0 138.8L975.7 135.8" stroke="#5a5652" stroke-opacity="0.1902985860260371" stroke-width="0.8"/><path d="M1030.5 206.9L1089.1 201.0" stroke="#5a5652" stroke-opacity="0.2354351694648828" stroke-width="0.8"/><path d="M1173.4 207.3L1250.0 199.6" stroke="#5a5652" stroke-opacity="0.3271860884121952" stroke-width="0.8"/><path d="M1338.5 161.5L1420.9 153.3" stroke="#5a5652" stroke-opacity="0.32153516410678723" stroke-width="0.8"/><path d="M946.3 74.4L946.2 96.5" stroke="#5a5652" stroke-opacity="0.23517680506441965" stroke-width="0.8"/><path d="M1091.5 108.5L1056.6 123.6" stroke="#5a5652" stroke-opacity="0.2758666191975693" stroke-width="0.8"/><path d="M989.6 204.3L990.4 225.9" stroke="#5a5652" stroke-opacity="0.29305549983862295" stroke-width="0.8"/><path d="M1113.8 214.8L1113.5 241.9" stroke="#5a5652" stroke-opacity="0.2687888131556199" stroke-width="0.8"/><path d="M957.0 87.3L942.0 113.4" stroke="#5a5652" stroke-opacity="0.18739870746177278" stroke-width="0.8"/><path d="M1055.9 140.6L1098.9 136.3" stroke="#5a5652" stroke-opacity="0.4390413161884018" stroke-width="0.8"/><path d="M1337.3 181.1L1338.2 228.7" stroke="#5a5652" stroke-opacity="0.33730703704699094" stroke-width="0.8"/><path d="M1262.4 50.8L1262.3 90.9" stroke="#5a5652" stroke-opacity="0.36112267760462846" stroke-width="0.8"/><path d="M1065.2 69.5L1039.1 67.8" stroke="#5a5652" stroke-opacity="0.20154942789868938" stroke-width="0.8"/><path d="M1070.5 174.9L1053.7 184.3" stroke="#5a5652" stroke-opacity="0.1951254436558284" stroke-width="0.8"/><path d="M1188.6 114.9L1215.7 112.1" stroke="#5a5652" stroke-opacity="0.2519681302841842" stroke-width="0.8"/><path d="M1347.2 123.9L1430.2 115.6" stroke="#5a5652" stroke-opacity="0.44911877840617276" stroke-width="0.8"/><path d="M1139.7 76.9L1161.5 74.7" stroke="#5a5652" stroke-opacity="0.2854888084453979" stroke-width="0.8"/><path d="M976.4 105.3L1034.2 99.6" stroke="#5a5652" stroke-opacity="0.42181286480293" stroke-width="0.8"/><path d="M1276.1 112.8L1330.4 107.3" stroke="#5a5652" stroke-opacity="0.29421645341485714" stroke-width="0.8"/><path d="M1088.9 69.3L1176.5 60.5" stroke="#5a5652" stroke-opacity="0.23146845043963413" stroke-width="0.8"/><path d="M1164.0 154.7L1144.2 140.9" stroke="#5a5652" stroke-opacity="0.18726804746452058" stroke-width="0.8"/><path d="M1116.9 127.3L1141.3 149.7" stroke="#5a5652" stroke-opacity="0.15327157653188" stroke-width="0.8"/><path d="M949.7 173.9L947.8 179.1" stroke="#5a5652" stroke-opacity="0.15002680317290634" stroke-width="0.8"/><path d="M1113.1 203.5L1138.0 231.8" stroke="#5a5652" stroke-opacity="0.1872697924633777" stroke-width="0.8"/><path d="M984.6 92.4L985.0 140.1" stroke="#5a5652" stroke-opacity="0.3804338222388247" stroke-width="0.8"/><path d="M1229.5 175.1L1229.6 186.7" stroke="#5a5652" stroke-opacity="0.39557465450028284" stroke-width="0.8"/><path d="M1040.8 202.9L1040.4 218.1" stroke="#5a5652" stroke-opacity="0.26294848682033484" stroke-width="0.8"/><path d="M1224.5 164.1L1244.8 162.0" stroke="#5a5652" stroke-opacity="0.331109170510509" stroke-width="0.8"/><path d="M1200.2 113.1L1260.3 107.1" stroke="#5a5652" stroke-opacity="0.20261540997303337" stroke-width="0.8"/><path d="M1072.2 132.1L1082.3 155.1" stroke="#5a5652" stroke-opacity="0.22129563301013153" stroke-width="0.8"/><path d="M1041.8 101.5L1056.1 90.0" stroke="#5a5652" stroke-opacity="0.1532681076162851" stroke-width="0.8"/><path d="M1161.7 162.0L1196.0 158.6" stroke="#5a5652" stroke-opacity="0.3668387622094199" stroke-width="0.8"/><path d="M1355.9 74.2L1396.3 70.2" stroke="#5a5652" stroke-opacity="0.30513921149507145" stroke-width="0.8"/><path d="M1245.6 77.8L1262.3 78.1" stroke="#5a5652" stroke-opacity="0.18078278805579498" stroke-width="0.8"/><path d="M1376.3 88.4L1357.4 71.6" stroke="#5a5652" stroke-opacity="0.2640706109508878" stroke-width="0.8"/><path d="M1069.2 207.6L1068.6 226.6" stroke="#5a5652" stroke-opacity="0.30425727052687856" stroke-width="0.8"/><path d="M1237.7 206.3L1282.2 201.8" stroke="#5a5652" stroke-opacity="0.25323726874520763" stroke-width="0.8"/><path d="M1378.2 57.1L1397.7 55.2" stroke="#5a5652" stroke-opacity="0.2983304240734167" stroke-width="0.8"/><path d="M1343.7 193.9L1344.7 241.2" stroke="#5a5652" stroke-opacity="0.2823106899683988" stroke-width="0.8"/><path d="M1019.4 205.5L1018.5 242.1" stroke="#5a5652" stroke-opacity="0.29465485408739556" stroke-width="0.8"/><path d="M1105.1 110.1L1120.3 108.5" stroke="#5a5652" stroke-opacity="0.2699516070648338" stroke-width="0.8"/><path d="M1094.9 208.1L1182.2 199.3" stroke="#5a5652" stroke-opacity="0.2518506083267362" stroke-width="0.8"/><path d="M1097.3 187.1L1092.5 160.1" stroke="#5a5652" stroke-opacity="0.22101960762856432" stroke-width="0.8"/><path d="M1104.6 202.4L1146.9 198.1" stroke="#5a5652" stroke-opacity="0.4242483412372588" stroke-width="0.8"/><path d="M948.8 131.7L967.4 104.1" stroke="#5a5652" stroke-opacity="0.15522815786009722" stroke-width="0.8"/><path d="M963.5 203.6L1034.5 196.5" stroke="#5a5652" stroke-opacity="0.42463794724199233" stroke-width="0.8"/><path d="M1089.3 101.9L1097.5 87.6" stroke="#5a5652" stroke-opacity="0.25749536196467726" stroke-width="0.8"/><path d="M1079.0 103.2L1150.7 96.0" stroke="#5a5652" stroke-opacity="0.42911490091245313" stroke-width="0.8"/><path d="M1223.5 205.4L1256.0 202.2" stroke="#5a5652" stroke-opacity="0.31879726446340084" stroke-width="0.8"/><path d="M1370.3 206.5L1404.2 203.2" stroke="#5a5652" stroke-opacity="0.30748452099934265" stroke-width="0.8"/><path d="M1159.5 203.3L1234.7 195.8" stroke="#5a5652" stroke-opacity="0.3846220033305041" stroke-width="0.8"/><path d="M1309.4 174.7L1309.0 197.5" stroke="#5a5652" stroke-opacity="0.2904646102037896" stroke-width="0.8"/><path d="M1290.9 53.3L1362.4 46.1" stroke="#5a5652" stroke-opacity="0.2618268780554771" stroke-width="0.8"/><path d="M964.5 76.9L964.1 126.1" stroke="#5a5652" stroke-opacity="0.4208686566077572" stroke-width="0.8"/><path d="M1384.5 79.7L1406.7 77.5" stroke="#5a5652" stroke-opacity="0.3246188170992437" stroke-width="0.8"/><path d="M1257.9 119.7L1304.2 115.1" stroke="#5a5652" stroke-opacity="0.35507691147041054" stroke-width="0.8"/><path d="M1241.7 172.0L1253.2 149.3" stroke="#5a5652" stroke-opacity="0.2761306769705453" stroke-width="0.8"/><path d="M1068.7 148.6L1139.0 141.5" stroke="#5a5652" stroke-opacity="0.249797522722553" stroke-width="0.8"/><path d="M1047.6 100.9L1128.9 92.7" stroke="#5a5652" stroke-opacity="0.34457018894748787" stroke-width="0.8"/><path d="M1083.5 121.5L1084.0 105.4" stroke="#5a5652" stroke-opacity="0.27126643370897596" stroke-width="0.8"/><path d="M1232.3 213.5L1282.9 208.4" stroke="#5a5652" stroke-opacity="0.404775676561731" stroke-width="0.8"/><path d="M1317.5 199.7L1354.5 196.0" stroke="#5a5652" stroke-opacity="0.22980415718702815" stroke-width="0.8"/><path d="M1021.3 211.0L1022.1 235.9" stroke="#5a5652" stroke-opacity="0.41653183210223726" stroke-width="0.8"/><path d="M1139.3 96.3L1170.5 72.6" stroke="#5a5652" stroke-opacity="0.23942205985230142" stroke-width="0.8"/><path d="M1217.1 83.4L1242.7 80.8" stroke="#5a5652" stroke-opacity="0.2509941093621287" stroke-width="0.8"/><path d="M1051.0 154.3L1050.4 164.7" stroke="#5a5652" stroke-opacity="0.28181230800039114" stroke-width="0.8"/><path d="M1243.6 75.8L1273.9 72.7" stroke="#5a5652" stroke-opacity="0.3988202920102053" stroke-width="0.8"/><path d="M1184.4 60.5L1229.0 56.0" stroke="#5a5652" stroke-opacity="0.3375344025987241" stroke-width="0.8"/><path d="M1225.8 61.3L1293.0 54.6" stroke="#5a5652" stroke-opacity="0.30244723034694554" stroke-width="0.8"/><path d="M1063.9 109.1L1050.8 113.1" stroke="#5a5652" stroke-opacity="0.2035772574105263" stroke-width="0.8"/><path d="M1124.5 193.4L1114.9 175.3" stroke="#5a5652" stroke-opacity="0.2592047546859534" stroke-width="0.8"/><path d="M1027.7 66.6L1022.3 85.8" stroke="#5a5652" stroke-opacity="0.21093265255294252" stroke-width="0.8"/><path d="M1336.7 117.9L1352.8 116.3" stroke="#5a5652" stroke-opacity="0.33788696405011565" stroke-width="0.8"/><path d="M1226.5 199.7L1288.2 193.6" stroke="#5a5652" stroke-opacity="0.29271090615028317" stroke-width="0.8"/><path d="M1164.5 75.8L1218.6 70.4" stroke="#5a5652" stroke-opacity="0.43137494747917493" stroke-width="0.8"/><path d="M984.5 141.1L1017.2 123.0" stroke="#5a5652" stroke-opacity="0.16899755318160237" stroke-width="0.8"/><path d="M1364.1 210.5L1363.2 257.6" stroke="#5a5652" stroke-opacity="0.29697379560450915" stroke-width="0.8"/><path d="M1346.4 146.2L1322.6 163.4" stroke="#5a5652" stroke-opacity="0.18331126304833562" stroke-width="0.8"/><path d="M1119.0 190.7L1096.8 173.7" stroke="#5a5652" stroke-opacity="0.2099618374614593" stroke-width="0.8"/><path d="M1170.6 114.2L1204.2 110.8" stroke="#5a5652" stroke-opacity="0.38122067268127524" stroke-width="0.8"/><path d="M1343.3 41.6L1343.8 53.1" stroke="#5a5652" stroke-opacity="0.40955106490143167" stroke-width="0.8"/><path d="M988.6 156.8L988.8 179.0" stroke="#5a5652" stroke-opacity="0.305017966233588" stroke-width="0.8"/><path d="M1200.1 119.4L1200.0 146.9" stroke="#5a5652" stroke-opacity="0.2058438200568931" stroke-width="0.8"/><path d="M1216.6 129.2L1288.9 121.9" stroke="#5a5652" stroke-opacity="0.3949937228466761" stroke-width="0.8"/><path d="M1143.5 83.0L1142.7 98.2" stroke="#5a5652" stroke-opacity="0.3076497516880414" stroke-width="0.8"/><path d="M976.7 134.5L975.8 170.0" stroke="#5a5652" stroke-opacity="0.2205602569917701" stroke-width="0.8"/><path d="M1268.7 176.4L1267.8 206.6" stroke="#5a5652" stroke-opacity="0.2944656574218453" stroke-width="0.8"/><path d="M1367.6 56.7L1402.4 70.6" stroke="#5a5652" stroke-opacity="0.2722484172615275" stroke-width="0.8"/><path d="M1023.1 212.3L1024.1 258.9" stroke="#5a5652" stroke-opacity="0.2412778792644552" stroke-width="0.8"/><path d="M1293.7 202.8L1335.0 198.7" stroke="#5a5652" stroke-opacity="0.38904494168650505" stroke-width="0.8"/><path d="M1007.2 199.8L1083.4 192.2" stroke="#5a5652" stroke-opacity="0.23589307377890012" stroke-width="0.8"/><path d="M1163.5 202.0L1198.2 198.5" stroke="#5a5652" stroke-opacity="0.3265017431925967" stroke-width="0.8"/><path d="M1080.2 66.2L1107.3 63.5" stroke="#5a5652" stroke-opacity="0.43410094022415235" stroke-width="0.8"/><path d="M1443.0 31.0L1535.0 440.0" stroke="#5a5652" stroke-opacity="0.3" stroke-width="0.8"/><path d="M1448.0 31.0L1540.0 440.0" stroke="#5a5652" stroke-opacity="0.3" stroke-width="0.8"/><path d="M1452.0 31.0L1544.0 440.0" stroke="#5a5652" stroke-opacity="0.3" stroke-width="0.8"/><path d="M1400.0 31.0L1465.0 430.0" stroke="#5a5652" stroke-opacity="0.22" stroke-width="0.8"/><path d="M1408.0 31.0L1473.0 430.0" stroke="#5a5652" stroke-opacity="0.18" stroke-width="0.8"/><path d="M999.4 236 L1004.6 236 L992.6 381 L990 391 L987.4 381 Z" fill="#3c3733" fill-opacity="0.55" stroke="#5e544a" stroke-opacity="0.45" stroke-width="0.7"/><path d="M1082.4 250 L1087.6 250 L1082.6 361 L1080 371 L1077.4 361 Z" fill="#3c3733" fill-opacity="0.55" stroke="#5e544a" stroke-opacity="0.45" stroke-width="0.7"/><path d="M1097.4 250 L1102.6 250 L1098.6 386 L1096 396 L1093.4 386 Z" fill="#3c3733" fill-opacity="0.55" stroke="#5e544a" stroke-opacity="0.45" stroke-width="0.7"/><path d="M1133.9 250 L1139.1 250 L1137.6 373 L1135 383 L1132.4 373 Z" fill="#3c3733" fill-opacity="0.55" stroke="#5e544a" stroke-opacity="0.45" stroke-width="0.7"/><path d="M1154.4 250 L1159.6 250 L1159.6 363 L1157 373 L1154.4 363 Z" fill="#3c3733" fill-opacity="0.55" stroke="#5e544a" stroke-opacity="0.45" stroke-width="0.7"/><path d="M1197.4 240 L1202.6 240 L1206.6 417 L1204 427 L1201.4 417 Z" fill="#3c3733" fill-opacity="0.55" stroke="#5e544a" stroke-opacity="0.45" stroke-width="0.7"/><path d="M1215.4 240 L1220.6 240 L1224.6 394 L1222 404 L1219.4 394 Z" fill="#3c3733" fill-opacity="0.55" stroke="#5e544a" stroke-opacity="0.45" stroke-width="0.7"/><path d="M1228.4 240 L1233.6 240 L1239.1 377 L1236.5 387 L1233.9 377 Z" fill="#3c3733" fill-opacity="0.55" stroke="#5e544a" stroke-opacity="0.45" stroke-width="0.7"/><path d="M1239.4 240 L1244.6 240 L1246.1 367 L1243.5 377 L1240.9 367 Z" fill="#3c3733" fill-opacity="0.55" stroke="#5e544a" stroke-opacity="0.45" stroke-width="0.7"/><path d="M1328.4 215 L1333.6 215 L1344.6 369 L1342 379 L1339.4 369 Z" fill="#3c3733" fill-opacity="0.55" stroke="#5e544a" stroke-opacity="0.45" stroke-width="0.7"/><path d="M1337.4 215 L1342.6 215 L1356.6 381 L1354 391 L1351.4 381 Z" fill="#3c3733" fill-opacity="0.55" stroke="#5e544a" stroke-opacity="0.45" stroke-width="0.7"/><path d="M1357.4 210 L1362.6 210 L1379.6 402 L1377 412 L1374.4 402 Z" fill="#3c3733" fill-opacity="0.55" stroke="#5e544a" stroke-opacity="0.45" stroke-width="0.7"/><path d="M1378.4 205 L1383.6 205 L1412.6 431 L1410 441 L1407.4 431 Z" fill="#3c3733" fill-opacity="0.55" stroke="#5e544a" stroke-opacity="0.45" stroke-width="0.7"/><path d="M1493.4 190 L1498.6 190 L1537.6 431 L1535 441 L1532.4 431 Z" fill="#3c3733" fill-opacity="0.55" stroke="#5e544a" stroke-opacity="0.45" stroke-width="0.7"/><path d="M972.4 236 L977.6 236 L970.6 320 L968 330 L965.4 320 Z" fill="#3c3733" fill-opacity="0.55" stroke="#5e544a" stroke-opacity="0.45" stroke-width="0.7"/><path d="M1045.4 370 L1050.6 370 L1047.6 408 L1045 418 L1042.4 408 Z" fill="#3c3733" fill-opacity="0.55" stroke="#5e544a" stroke-opacity="0.45" stroke-width="0.7"/></g><path d="M935 234 L1100 216.5 L1392 196.5 L1392 255 L1083 272 Z" fill="#202020" fill-opacity="0.55"/><path d="M927.6 208.6 L1500.7 147.9 L1503.8 170.7 L926.4 224.9 Z" fill="#ff8c42"/><path d="M1398 159 L1400 182" stroke="#b05a20" stroke-width="0.8"/><path d="M959.6 231 L1000 230.5 L1082 255 L1082 269 L952 235 Z" fill="#ff6a30"/><path d="M1082 255 L1392 243 L1392 256 L1082 269 Z" fill="#ff8a40"/><path d="M1070 221.5 L1100 220 L1161 255 L1161 265 L1068 228 Z" fill="#ff6a30"/><path d="M1340 200 L1356 199 L1338 250 L1322 249 Z" fill="#ff7a36"/><path d="M1212 211 L1228 210 L1236 232 L1222 236 Z" fill="#ff6a30"/><path d="M1004 231 L1012 233 L1012 246 L1004 244 Z" fill="#ff9a50"/><path d="M1058 247 L1064 249 L1064 262 L1058 260 Z" fill="#ff9a50"/><path d="M1165 256 L1172 256 L1172 266 L1165 266 Z" fill="#ff9a50"/><path d="M920.4 230.5 L952 234 L1000 246 L1082 269 L1082 274.4 Z" fill="#f5f21a"/><path d="M1082 268.5 L1392 255.5 L1393 260 L1082 274.4 Z" fill="#f5f21a"/><path d="M930 234 L1082 271 L1392 257.8" stroke="#9a9600" stroke-width="0.7" fill="none"/><path d="M1059 222 L1070 221.5 L1163 266 L1152 270 Z" fill="#f5f21a"/><path d="M1064 223 L1157 268" stroke="#9a9600" stroke-width="0.6"/><path d="M1193.6 209 L1212 207.5 L1246 266.5 L1232 268.5 Z" fill="#f5f21a"/><path d="M1203 209 L1238 267" stroke="#9a9600" stroke-width="0.6"/><path d="M1355 198 L1392 196.5 L1345 262 L1322 257 Z" fill="#f5f21a"/><path d="M1362 199 L1330 258" stroke="#9a9600" stroke-width="0.6"/><path d="M919.2 226 L1503.8 170.7 L1515.6 171.7 L1515 176.8 L1497.6 189 L1220 211.5 L931 236.5 L920.4 230.5 Z" fill="#f5f21a"/><path d="M921 229.5 L1514 174.5" stroke="#8f8b00" stroke-width="0.7" fill="none"/><path d="M1100 219 L1497 186" stroke="#8f8b00" stroke-width="0.5" fill="none"/><path d="M936 233 L942 233 L921 397 L915 397 Z" fill="#2cc22c"/><ellipse cx="918" cy="396" rx="7" ry="2.5" fill="#22cc22"/><path d="M917.5 397 L917 407" stroke="#22cc22" stroke-width="1.5"/><path d="M1054.5 236 L1058.5 236 L1048.5 375 L1045.5 375 Z" fill="#85584a" fill-opacity="0.85"/><path d="M1043 375 L1050 372 L1047 380 Z" fill="#d06030"/></svg>
<div style="position:absolute;left:606px;top:275px;width:92px;height:92px;border-radius:46px;background:#232323"></div>
<svg style="position:absolute;left:620px;top:280px;" width="60" height="60" viewBox="0 0 60 60">
<path d="M32 41 V19" stroke="#4a4af0" stroke-width="1.6"/><path d="M29.5 20 L32 14 L34.5 20Z" fill="#4a4af0"/>
<text x="34.5" y="11" font-family="Liberation Sans" font-size="8" fill="#4a4af0" text-anchor="middle">Z</text>
<path d="M32 41 L12 42.5" stroke="#e04040" stroke-width="1.4"/><path d="M15 40.5 L10 42.8 L15 44.5Z" fill="#e04040"/>
<text x="5.5" y="44" font-family="Liberation Sans" font-size="7" fill="#e04040" text-anchor="middle">X</text>
<path d="M32 41 L25 34.5" stroke="#30d030" stroke-width="2"/><circle cx="24.5" cy="33.5" r="2.3" fill="#30d030"/>
<text x="21.5" y="30" font-family="Liberation Sans" font-size="7.5" fill="#30c030" text-anchor="middle">Y</text>
<circle cx="32" cy="41" r="4.2" fill="#9a9a9a"/></svg>
<svg style="position:absolute;left:1630px;top:65px;" width="85" height="85" viewBox="0 0 85 85"><path d="M10.6 16.6 L67 8.2 L70.6 73.5 L6.8 74 Z" fill="#ffffff"/><path d="M67 8.2 L73 30 L76 75 L70.6 73.5 Z" fill="#f0f0f0" stroke="#999" stroke-width="0.5"/><path d="M6.8 74 L70.6 73.5 L76 75 L12 76 Z" fill="#cfcfcf"/><g transform="translate(37.5 50.5) rotate(-5) scale(0.62 1)"><text x="0" y="0" font-family="Liberation Sans" font-size="20" fill="#a8a8a8" text-anchor="middle">Сзади</text></g></svg>
<div style="position:absolute;left:520px;top:39px;width:32px;height:32px;background:#545454;"></div>
<svg style="position:absolute;left:520px;top:39px;" width="32" height="32" viewBox="0 0 32 32"><path d="M4.5 10V4.5H10M22 4.5H27.5V10M27.5 22V27.5H22M10 27.5H4.5V22" stroke="#e6e6e6" stroke-width="1.4" fill="none"/><path d="M16 9.6L21.5 12.8V19.2L16 22.4L10.5 19.2V12.8Z" fill="#e0e0e0"/></svg>
<div style="position:absolute;left:520px;top:73px;width:32px;height:32px;background:#545454;"></div>
<svg style="position:absolute;left:520px;top:73px;" width="32" height="32" viewBox="0 0 32 32"><circle cx="16" cy="16" r="8" stroke="#e6e6e6" stroke-width="1.6" fill="none"/><circle cx="16" cy="16" r="3.5" fill="#e0e0e0"/><path d="M16 5V8M16 24V27M5 16H8M24 16H27" stroke="#e6e6e6" stroke-width="1.6"/></svg>
<div style="position:absolute;left:520px;top:125px;width:32px;height:32px;background:#545454;"></div>
<svg style="position:absolute;left:520px;top:125px;" width="32" height="32" viewBox="0 0 32 32"><rect x="2.6" y="8.2" width="15.5" height="15.2" rx="3.5" stroke="#dcdcdc" stroke-width="1.3" fill="none"/><circle cx="9.9" cy="15.8" r="4" fill="#e0e0e0"/><path d="M18.1 16.3H30.5V23.4H18.1" stroke="#dcdcdc" stroke-width="1.3" fill="none"/><path d="M21.5 20.5v2.5M24.5 20.5v2.5M27.5 20.5v2.5" stroke="#dcdcdc" stroke-width="1.2"/><path d="M31.5 27V31.5H27Z" fill="#e0e0e0"/></svg>
<div style="position:absolute;left:520px;top:159px;width:32px;height:32px;background:#545454;"></div>
<svg style="position:absolute;left:520px;top:159px;" width="32" height="32" viewBox="0 0 32 32"><path d="M2 18.5L8.6 12H29L22.4 18.5Z" stroke="#dcdcdc" stroke-width="1" fill="none"/><path d="M11.2 11L21.1 3V21.5L11.2 29.8Z" fill="#e0e0e0"/></svg>
<div style="position:absolute;left:520px;top:193px;width:32px;height:32px;background:#545454;"></div>
<svg style="position:absolute;left:520px;top:193px;" width="32" height="32" viewBox="0 0 32 32"><path d="M12.3 10.2L19.6 5.6V21.4L12.3 26.2Z" fill="#dedede"/><path d="M4.6 10.2H20.8V26.2H4.6ZM11.5 5.6H27.7V21.4H11.5ZM4.6 10.2L11.5 5.6M20.8 10.2L27.7 5.6M4.6 26.2L11.5 21.4M20.8 26.2L27.7 21.4M12.3 10.2V26.2M19.6 5.6V21.4" stroke="#e6e6e6" stroke-width="1.1" fill="none"/></svg>
<div style="position:absolute;left:520px;top:245px;width:32px;height:32px;background:#545454;"></div>
<svg style="position:absolute;left:520px;top:245px;" width="32" height="32" viewBox="0 0 32 32"><rect x="4" y="4.5" width="24" height="23" stroke="#dcdcdc" stroke-width="1.1" stroke-dasharray="3 2" fill="none"/><path d="M16 9.5L21.5 12.5V18.5L16 21.5L10.5 18.5V12.5Z M10.5 12.5L16 15.5L21.5 12.5M16 15.5V21.5" stroke="#dcdcdc" stroke-width="1" fill="none"/></svg>
<div style="position:absolute;left:520px;top:279px;width:32px;height:32px;background:#545454;"></div>
<svg style="position:absolute;left:520px;top:279px;" width="32" height="32" viewBox="0 0 32 32"><rect x="4" y="4.5" width="24" height="23" stroke="#dcdcdc" stroke-width="1.1" stroke-dasharray="3 2" fill="none"/><path d="M6.5 16C9.5 11 13 9.8 16 9.8C19 9.8 22.5 11 25.5 16C22.5 21 19 22.2 16 22.2C13 22.2 9.5 21 6.5 16Z" fill="#e6e6e6"/><circle cx="16" cy="16" r="3.6" fill="#545454"/><circle cx="16" cy="16" r="1.7" fill="#e6e6e6"/></svg>
<div style="position:absolute;left:520px;top:313px;width:32px;height:32px;background:#545454;"></div>
<svg style="position:absolute;left:520px;top:313px;" width="32" height="32" viewBox="0 0 32 32"><rect x="4" y="4.5" width="24" height="23" stroke="#dcdcdc" stroke-width="1.1" stroke-dasharray="3 2" fill="none"/><path d="M6.5 16C9.5 11 13 9.8 16 9.8C19 9.8 22.5 11 25.5 16C22.5 21 19 22.2 16 22.2C13 22.2 9.5 21 6.5 16Z" fill="#e6e6e6"/><circle cx="16" cy="16" r="3.6" fill="#545454"/><path d="M10 8.5L23 23.5" stroke="#545454" stroke-width="3"/><path d="M10 8.5L23 23.5" stroke="#e6e6e6" stroke-width="1.3"/></svg>
<div style="position:absolute;left:520px;top:347px;width:32px;height:32px;background:#545454;"></div>
<svg style="position:absolute;left:520px;top:347px;" width="32" height="32" viewBox="0 0 32 32"><rect x="4" y="4.5" width="24" height="23" stroke="#dcdcdc" stroke-width="1.1" stroke-dasharray="3 2" fill="none"/><rect x="13.5" y="14.5" width="15" height="14.5" fill="#e6e6e6"/><path d="M17.5 18.5L24.5 25.5M24.5 18.5L17.5 25.5" stroke="#444" stroke-width="1.5"/></svg>
<div style="position:absolute;left:562px;top:451px;width:1156px;height:381px;border-radius:4px 0 0 0;background:#545454;overflow:hidden"></div>
<div style="position:absolute;left:1148px;top:457px;width:42px;height:3px;background:#3a9cc0;"></div>
<svg style="position:absolute;left:569px;top:466px;" width="20" height="16" viewBox="0 0 20 16"><path d="M1 1.5h13M1 5.5h13M1 9.5h10" stroke="#ececec" stroke-width="1.8"/><path d="M11.5 10v6l4.5-3z" fill="#ececec"/></svg>
<div class="t" style="left:594px;top:466.30px;font-size:15px;line-height:15px;color:#e8e8e8;font-weight:400;letter-spacing:0.3px;">Коллизии</div>
<svg style="position:absolute;left:1517px;top:463px;" width="20" height="20" viewBox="0 0 20 20"><path d="M13.5 3.8V2.5Q13.5 1 12 1H2.7Q1.2 1 1.2 2.5V12.2Q1.2 13.7 2.7 13.7H12Q13.5 13.7 13.5 12.2V10M6.2 9.6V7.7Q6.2 6.2 7.7 6.2H17Q18.5 6.2 18.5 7.7V17Q18.5 18.5 17 18.5H7.7Q6.2 18.5 6.2 17V15.5" stroke="#e6e6e6" stroke-width="1.7" fill="none"/></svg>
<svg style="position:absolute;left:1556px;top:465px;" width="16" height="19" viewBox="0 0 16 19"><path d="M1 2.1H14.7M1 16.8H14.7" stroke="#e6e6e6" stroke-width="1.8"/><path d="M7.85 4.5V14.4" stroke="#e6e6e6" stroke-width="1.5"/><path d="M5 6.5L7.85 3.8 10.7 6.5ZM5 12.4L7.85 15.1 10.7 12.4Z" fill="#e6e6e6"/></svg>
<svg style="position:absolute;left:1592px;top:464px;" width="16" height="20" viewBox="0 0 16 20"><path d="M1 10H15" stroke="#e6e6e6" stroke-width="3.6"/><path d="M8 0.5V5.5M8 14.5V19.5" stroke="#e6e6e6" stroke-width="1.5"/><path d="M5.3 4.8L8 7.6 10.7 4.8ZM5.3 15.2L8 12.4 10.7 15.2Z" fill="#e6e6e6"/></svg>
<svg style="position:absolute;left:1627px;top:464px;" width="18" height="20" viewBox="0 0 18 20"><path d="M3.2 13.5A6.2 6.2 0 0 1 10.5 4.3M15.6 7.2A6.2 6.2 0 0 1 8.3 16.6" stroke="#e6e6e6" stroke-width="1.7" fill="none"/><path d="M9.6 1.2L13.6 4.4 9.6 7.6ZM9.2 13.4L5.2 16.6 9.2 19.8Z" fill="#e6e6e6"/></svg>
<svg style="position:absolute;left:1662px;top:464px;" width="20" height="20" viewBox="0 0 20 20"><g transform="translate(10 10)"><rect x="-1.9" y="-9" width="3.8" height="5" rx="0.6" transform="rotate(0)" fill="#e6e6e6"/><rect x="-1.9" y="-9" width="3.8" height="5" rx="0.6" transform="rotate(60)" fill="#e6e6e6"/><rect x="-1.9" y="-9" width="3.8" height="5" rx="0.6" transform="rotate(120)" fill="#e6e6e6"/><rect x="-1.9" y="-9" width="3.8" height="5" rx="0.6" transform="rotate(180)" fill="#e6e6e6"/><rect x="-1.9" y="-9" width="3.8" height="5" rx="0.6" transform="rotate(240)" fill="#e6e6e6"/><rect x="-1.9" y="-9" width="3.8" height="5" rx="0.6" transform="rotate(300)" fill="#e6e6e6"/><circle r="6.6" fill="#e6e6e6"/><circle r="2.9" fill="#545454"/></g></svg>
<svg style="position:absolute;left:1702px;top:471px;" width="12" height="8" viewBox="0 0 12 8"><path d="M1 1.2L6 6.2 11 1.2" stroke="#e6e6e6" stroke-width="1.6" fill="none"/></svg>
<div style="position:absolute;left:562px;top:492px;width:1156px;height:32px;background:#676767;"></div>
<div style="position:absolute;left:562px;top:492px;width:64px;height:32px;background:#ffffff;"></div>
<div style="position:absolute;left:1048px;top:492px;width:1px;height:32px;background:#5a5a5a;"></div>
<div style="position:absolute;left:1248px;top:492px;width:1px;height:32px;background:#5a5a5a;"></div>
<div style="position:absolute;left:1348px;top:492px;width:1px;height:32px;background:#5a5a5a;"></div>
<div style="position:absolute;left:1465px;top:492px;width:1px;height:32px;background:#5a5a5a;"></div>
<div style="position:absolute;left:1615px;top:492px;width:1px;height:32px;background:#5a5a5a;"></div>
<div class="t" style="left:867px;top:502.34px;font-size:12px;line-height:12px;color:#f0f0f0;font-weight:700;letter-spacing:-0.35px;">Элемент (Модель А)</div>
<div class="t" style="left:1064px;top:502.34px;font-size:12px;line-height:12px;color:#f0f0f0;font-weight:700;letter-spacing:-0.35px;">Элемент (Модель В)</div>
<div class="t" style="left:1264.8px;top:502.34px;font-size:12px;line-height:12px;color:#f0f0f0;font-weight:700;letter-spacing:-0.35px;">Задача</div>
<div class="t" style="left:1364.8px;top:502.34px;font-size:12px;line-height:12px;color:#f0f0f0;font-weight:700;letter-spacing:-0.35px;">Расстояние</div>
<div class="t" style="left:1482px;top:502.34px;font-size:12px;line-height:12px;color:#f0f0f0;font-weight:700;letter-spacing:-0.35px;">Тип</div>
<div class="t" style="left:1632px;top:502.34px;font-size:12px;line-height:12px;color:#f0f0f0;font-weight:700;letter-spacing:-0.35px;">Допустимое расстояние</div>
<div style="position:absolute;left:562px;top:524px;width:1156px;height:32px;background:#ffffff;"></div>
<div style="position:absolute;left:626px;top:523px;width:1092px;height:1px;background:#5e5e5e;"></div>
<div style="position:absolute;left:562px;top:523px;width:64px;height:1px;background:#d8d8d8;"></div>
<div style="position:absolute;left:562px;top:556px;width:1156px;height:32px;background:#b4b4b4;"></div>
<div style="position:absolute;left:562px;top:555px;width:1156px;height:1px;background:#c8c8c8;"></div>
<div style="position:absolute;left:1048px;top:556px;width:1px;height:32px;background:#3a3a3a;"></div>
<div style="position:absolute;left:1248px;top:556px;width:1px;height:32px;background:#3a3a3a;"></div>
<div style="position:absolute;left:1348px;top:556px;width:1px;height:32px;background:#3a3a3a;"></div>
<div style="position:absolute;left:1465px;top:556px;width:1px;height:32px;background:#3a3a3a;"></div>
<div style="position:absolute;left:1615px;top:556px;width:1px;height:32px;background:#3a3a3a;"></div>
<div style="position:absolute;left:864px;top:556px;width:183px;height:32px;overflow:hidden"><div class="t" style="left:16px;top:8.65px;font-size:14px;line-height:14px;color:#222;letter-spacing:-0.1px">ая_Винтовая_СВС_по_ТУ_</div></div>
<div style="position:absolute;left:1049px;top:556px;width:199px;height:32px;overflow:hidden"><div class="t" style="left:16px;top:8.65px;font-size:14px;line-height:14px;color:#222;letter-spacing:-0.25px">Фундаментная плита:ADSK_</div></div>
<div class="t" style="left:1364.8px;top:564.15px;font-size:14px;line-height:14px;color:#222;font-weight:400;letter-spacing:0px;">0.0 мм</div>
<div class="t" style="left:1482px;top:565.00px;font-size:13px;line-height:13px;color:#555;font-weight:400;letter-spacing:-0.2px;">неопредел...</div>
<svg style="position:absolute;left:1582px;top:567px;" width="10" height="5" viewBox="0 0 10 5"><path d="M0 0h10L5 5z" fill="#555"/></svg>
<div style="position:absolute;left:1482px;top:583px;width:117px;height:1px;background:#666;"></div>
<div class="t" style="left:1632px;top:562.96px;font-size:16px;line-height:16px;color:#222;font-weight:400;letter-spacing:0px;">0</div>
<div style="position:absolute;left:1632px;top:583px;width:86px;height:1px;background:#666;"></div>
<div style="position:absolute;left:562px;top:556px;width:64px;height:31px;background:#b4b4b4;"></div>
<div style="position:absolute;left:582.5px;top:562.5px;width:15px;height:15.5px;border-radius:2px;background:#3a93b0"></div>
<svg style="position:absolute;left:582.5px;top:562.5px;" width="15" height="15" viewBox="0 0 15 15"><path d="M3.2 7.6L6.2 10.6 12 4.6" stroke="#dcedf3" stroke-width="1.4" fill="none"/></svg>
<div style="position:absolute;left:562px;top:588px;width:1156px;height:32px;background:#ffffff;"></div>
<div style="position:absolute;left:562px;top:587px;width:1156px;height:1px;background:#d4d4d4;"></div>
<div style="position:absolute;left:1048px;top:588px;width:1px;height:32px;background:#3a3a3a;"></div>
<div style="position:absolute;left:1248px;top:588px;width:1px;height:32px;background:#3a3a3a;"></div>
<div style="position:absolute;left:1348px;top:588px;width:1px;height:32px;background:#3a3a3a;"></div>
<div style="position:absolute;left:1465px;top:588px;width:1px;height:32px;background:#3a3a3a;"></div>
<div style="position:absolute;left:1615px;top:588px;width:1px;height:32px;background:#3a3a3a;"></div>
<div style="position:absolute;left:864px;top:588px;width:183px;height:32px;overflow:hidden"><div class="t" style="left:16px;top:8.65px;font-size:14px;line-height:14px;color:#222;letter-spacing:-0.1px">ая_Винтовая_СВС_по_ТУ_</div></div>
<div style="position:absolute;left:1049px;top:588px;width:199px;height:32px;overflow:hidden"><div class="t" style="left:16px;top:8.65px;font-size:14px;line-height:14px;color:#222;letter-spacing:-0.25px">Перекрытие:ADSK_земля:10</div></div>
<div class="t" style="left:1364.8px;top:596.15px;font-size:14px;line-height:14px;color:#222;font-weight:400;letter-spacing:0px;">0.0 мм</div>
<div class="t" style="left:1482px;top:597.00px;font-size:13px;line-height:13px;color:#555;font-weight:400;letter-spacing:-0.2px;">неопредел...</div>
<svg style="position:absolute;left:1582px;top:599px;" width="10" height="5" viewBox="0 0 10 5"><path d="M0 0h10L5 5z" fill="#555"/></svg>
<div style="position:absolute;left:1482px;top:615px;width:117px;height:1px;background:#666;"></div>
<div class="t" style="left:1632px;top:594.96px;font-size:16px;line-height:16px;color:#222;font-weight:400;letter-spacing:0px;">0</div>
<div style="position:absolute;left:1632px;top:615px;width:86px;height:1px;background:#666;"></div>
<div style="position:absolute;left:562px;top:588px;width:64px;height:31px;background:#ffffff;"></div>
<div style="position:absolute;left:582.5px;top:594.5px;width:12px;height:12px;border-radius:2px;border:1.5px solid #6a6a6a;background:#fff"></div>
<div style="position:absolute;left:562px;top:620px;width:1156px;height:32px;background:#efefef;"></div>
<div style="position:absolute;left:562px;top:619px;width:1156px;height:1px;background:#d4d4d4;"></div>
<div style="position:absolute;left:1048px;top:620px;width:1px;height:32px;background:#3a3a3a;"></div>
<div style="position:absolute;left:1248px;top:620px;width:1px;height:32px;background:#3a3a3a;"></div>
<div style="position:absolute;left:1348px;top:620px;width:1px;height:32px;background:#3a3a3a;"></div>
<div style="position:absolute;left:1465px;top:620px;width:1px;height:32px;background:#3a3a3a;"></div>
<div style="position:absolute;left:1615px;top:620px;width:1px;height:32px;background:#3a3a3a;"></div>
<div style="position:absolute;left:864px;top:620px;width:183px;height:32px;overflow:hidden"><div class="t" style="left:16px;top:8.65px;font-size:14px;line-height:14px;color:#222;letter-spacing:-0.1px">ая_Винтовая_СВС_по_ТУ_</div></div>
<div style="position:absolute;left:1049px;top:620px;width:199px;height:32px;overflow:hidden"><div class="t" style="left:16px;top:8.65px;font-size:14px;line-height:14px;color:#222;letter-spacing:-0.25px">Фундаментная плита:ADSK_</div></div>
<div class="t" style="left:1364.8px;top:628.15px;font-size:14px;line-height:14px;color:#222;font-weight:400;letter-spacing:0px;">0.0 мм</div>
<div class="t" style="left:1482px;top:629.00px;font-size:13px;line-height:13px;color:#555;font-weight:400;letter-spacing:-0.2px;">неопредел...</div>
<svg style="position:absolute;left:1582px;top:631px;" width="10" height="5" viewBox="0 0 10 5"><path d="M0 0h10L5 5z" fill="#555"/></svg>
<div style="position:absolute;left:1482px;top:647px;width:117px;height:1px;background:#666;"></div>
<div class="t" style="left:1632px;top:626.96px;font-size:16px;line-height:16px;color:#222;font-weight:400;letter-spacing:0px;">0</div>
<div style="position:absolute;left:1632px;top:647px;width:86px;height:1px;background:#666;"></div>
<div style="position:absolute;left:562px;top:620px;width:64px;height:31px;background:#efefef;"></div>
<div style="position:absolute;left:582.5px;top:626.5px;width:12px;height:12px;border-radius:2px;border:1.5px solid #6a6a6a;background:#fff"></div>
<div style="position:absolute;left:562px;top:652px;width:1156px;height:32px;background:#ffffff;"></div>
<div style="position:absolute;left:562px;top:651px;width:1156px;height:1px;background:#d4d4d4;"></div>
<div style="position:absolute;left:1048px;top:652px;width:1px;height:32px;background:#3a3a3a;"></div>
<div style="position:absolute;left:1248px;top:652px;width:1px;height:32px;background:#3a3a3a;"></div>
<div style="position:absolute;left:1348px;top:652px;width:1px;height:32px;background:#3a3a3a;"></div>
<div style="position:absolute;left:1465px;top:652px;width:1px;height:32px;background:#3a3a3a;"></div>
<div style="position:absolute;left:1615px;top:652px;width:1px;height:32px;background:#3a3a3a;"></div>
<div style="position:absolute;left:864px;top:652px;width:183px;height:32px;overflow:hidden"><div class="t" style="left:16px;top:8.65px;font-size:14px;line-height:14px;color:#222;letter-spacing:-0.1px">ая_Винтовая_СВС_по_ТУ_</div></div>
<div style="position:absolute;left:1049px;top:652px;width:199px;height:32px;overflow:hidden"><div class="t" style="left:16px;top:8.65px;font-size:14px;line-height:14px;color:#222;letter-spacing:-0.25px">Фундаментная плита:ADSK_</div></div>
<div class="t" style="left:1364.8px;top:660.15px;font-size:14px;line-height:14px;color:#222;font-weight:400;letter-spacing:0px;">0.0 мм</div>
<div class="t" style="left:1482px;top:661.00px;font-size:13px;line-height:13px;color:#555;font-weight:400;letter-spacing:-0.2px;">неопредел...</div>
<svg style="position:absolute;left:1582px;top:663px;" width="10" height="5" viewBox="0 0 10 5"><path d="M0 0h10L5 5z" fill="#555"/></svg>
<div style="position:absolute;left:1482px;top:679px;width:117px;height:1px;background:#666;"></div>
<div class="t" style="left:1632px;top:658.96px;font-size:16px;line-height:16px;color:#222;font-weight:400;letter-spacing:0px;">0</div>
<div style="position:absolute;left:1632px;top:679px;width:86px;height:1px;background:#666;"></div>
<div style="position:absolute;left:562px;top:652px;width:64px;height:31px;background:#ffffff;"></div>
<div style="position:absolute;left:582.5px;top:658.5px;width:15px;height:15.5px;border-radius:2px;background:#3a93b0"></div>
<svg style="position:absolute;left:582.5px;top:658.5px;" width="15" height="15" viewBox="0 0 15 15"><path d="M3.2 7.6L6.2 10.6 12 4.6" stroke="#dcedf3" stroke-width="1.4" fill="none"/></svg>
<div style="position:absolute;left:562px;top:684px;width:1156px;height:32px;background:#efefef;"></div>
<div style="position:absolute;left:562px;top:683px;width:1156px;height:1px;background:#d4d4d4;"></div>
<div style="position:absolute;left:1048px;top:684px;width:1px;height:32px;background:#3a3a3a;"></div>
<div style="position:absolute;left:1248px;top:684px;width:1px;height:32px;background:#3a3a3a;"></div>
<div style="position:absolute;left:1348px;top:684px;width:1px;height:32px;background:#3a3a3a;"></div>
<div style="position:absolute;left:1465px;top:684px;width:1px;height:32px;background:#3a3a3a;"></div>
<div style="position:absolute;left:1615px;top:684px;width:1px;height:32px;background:#3a3a3a;"></div>
<div style="position:absolute;left:864px;top:684px;width:183px;height:32px;overflow:hidden"><div class="t" style="left:16px;top:8.65px;font-size:14px;line-height:14px;color:#222;letter-spacing:-0.1px">ая_Винтовая_СВС_по_ТУ_</div></div>
<div style="position:absolute;left:1049px;top:684px;width:199px;height:32px;overflow:hidden"><div class="t" style="left:16px;top:8.65px;font-size:14px;line-height:14px;color:#222;letter-spacing:-0.25px">Фундаментная плита:ADSK_</div></div>
<div class="t" style="left:1364.8px;top:692.15px;font-size:14px;line-height:14px;color:#222;font-weight:400;letter-spacing:0px;">0.0 мм</div>
<div class="t" style="left:1482px;top:693.00px;font-size:13px;line-height:13px;color:#555;font-weight:400;letter-spacing:-0.2px;">неопредел...</div>
<svg style="position:absolute;left:1582px;top:695px;" width="10" height="5" viewBox="0 0 10 5"><path d="M0 0h10L5 5z" fill="#555"/></svg>
<div style="position:absolute;left:1482px;top:711px;width:117px;height:1px;background:#666;"></div>
<div class="t" style="left:1632px;top:690.96px;font-size:16px;line-height:16px;color:#222;font-weight:400;letter-spacing:0px;">0</div>
<div style="position:absolute;left:1632px;top:711px;width:86px;height:1px;background:#666;"></div>
<div style="position:absolute;left:562px;top:684px;width:64px;height:31px;background:#efefef;"></div>
<div style="position:absolute;left:582.5px;top:690.5px;width:15px;height:15.5px;border-radius:2px;background:#3a93b0"></div>
<svg style="position:absolute;left:582.5px;top:690.5px;" width="15" height="15" viewBox="0 0 15 15"><path d="M3.2 7.6L6.2 10.6 12 4.6" stroke="#dcedf3" stroke-width="1.4" fill="none"/></svg>
<div style="position:absolute;left:562px;top:716px;width:1156px;height:32px;background:#ffffff;"></div>
<div style="position:absolute;left:562px;top:715px;width:1156px;height:1px;background:#d4d4d4;"></div>
<div style="position:absolute;left:1048px;top:716px;width:1px;height:32px;background:#3a3a3a;"></div>
<div style="position:absolute;left:1248px;top:716px;width:1px;height:32px;background:#3a3a3a;"></div>
<div style="position:absolute;left:1348px;top:716px;width:1px;height:32px;background:#3a3a3a;"></div>
<div style="position:absolute;left:1465px;top:716px;width:1px;height:32px;background:#3a3a3a;"></div>
<div style="position:absolute;left:1615px;top:716px;width:1px;height:32px;background:#3a3a3a;"></div>
<div style="position:absolute;left:864px;top:716px;width:183px;height:32px;overflow:hidden"><div class="t" style="left:16px;top:8.65px;font-size:14px;line-height:14px;color:#222;letter-spacing:-0.1px">ая_Винтовая_СВС_по_ТУ_</div></div>
<div style="position:absolute;left:1049px;top:716px;width:199px;height:32px;overflow:hidden"><div class="t" style="left:16px;top:8.65px;font-size:14px;line-height:14px;color:#222;letter-spacing:-0.25px">Фундаментная плита:ADSK_</div></div>
<div class="t" style="left:1364.8px;top:724.15px;font-size:14px;line-height:14px;color:#222;font-weight:400;letter-spacing:0px;">0.0 мм</div>
<div class="t" style="left:1482px;top:725.00px;font-size:13px;line-height:13px;color:#555;font-weight:400;letter-spacing:-0.2px;">неопредел...</div>
<svg style="position:absolute;left:1582px;top:727px;" width="10" height="5" viewBox="0 0 10 5"><path d="M0 0h10L5 5z" fill="#555"/></svg>
<div style="position:absolute;left:1482px;top:743px;width:117px;height:1px;background:#666;"></div>
<div class="t" style="left:1632px;top:722.96px;font-size:16px;line-height:16px;color:#222;font-weight:400;letter-spacing:0px;">0</div>
<div style="position:absolute;left:1632px;top:743px;width:86px;height:1px;background:#666;"></div>
<div style="position:absolute;left:562px;top:716px;width:64px;height:31px;background:#ffffff;"></div>
<div style="position:absolute;left:582.5px;top:722.5px;width:12px;height:12px;border-radius:2px;border:1.5px solid #6a6a6a;background:#fff"></div>
<div style="position:absolute;left:562px;top:748px;width:1156px;height:32px;background:#efefef;"></div>
<div style="position:absolute;left:562px;top:747px;width:1156px;height:1px;background:#d4d4d4;"></div>
<div style="position:absolute;left:1048px;top:748px;width:1px;height:32px;background:#3a3a3a;"></div>
<div style="position:absolute;left:1248px;top:748px;width:1px;height:32px;background:#3a3a3a;"></div>
<div style="position:absolute;left:1348px;top:748px;width:1px;height:32px;background:#3a3a3a;"></div>
<div style="position:absolute;left:1465px;top:748px;width:1px;height:32px;background:#3a3a3a;"></div>
<div style="position:absolute;left:1615px;top:748px;width:1px;height:32px;background:#3a3a3a;"></div>
<div style="position:absolute;left:864px;top:748px;width:183px;height:32px;overflow:hidden"><div class="t" style="left:16px;top:8.65px;font-size:14px;line-height:14px;color:#222;letter-spacing:-0.1px">ая_Винтовая_СВС_по_ТУ_</div></div>
<div style="position:absolute;left:1049px;top:748px;width:199px;height:32px;overflow:hidden"><div class="t" style="left:16px;top:8.65px;font-size:14px;line-height:14px;color:#222;letter-spacing:-0.25px">Фундаментная плита:ADSK_</div></div>
<div class="t" style="left:1364.8px;top:756.15px;font-size:14px;line-height:14px;color:#222;font-weight:400;letter-spacing:0px;">0.0 мм</div>
<div class="t" style="left:1482px;top:757.00px;font-size:13px;line-height:13px;color:#555;font-weight:400;letter-spacing:-0.2px;">неопредел...</div>
<svg style="position:absolute;left:1582px;top:759px;" width="10" height="5" viewBox="0 0 10 5"><path d="M0 0h10L5 5z" fill="#555"/></svg>
<div style="position:absolute;left:1482px;top:775px;width:117px;height:1px;background:#666;"></div>
<div class="t" style="left:1632px;top:754.96px;font-size:16px;line-height:16px;color:#222;font-weight:400;letter-spacing:0px;">0</div>
<div style="position:absolute;left:1632px;top:775px;width:86px;height:1px;background:#666;"></div>
<div style="position:absolute;left:562px;top:748px;width:64px;height:31px;background:#efefef;"></div>
<div style="position:absolute;left:582.5px;top:754.5px;width:12px;height:12px;border-radius:2px;border:1.5px solid #6a6a6a;background:#fff"></div>
<div style="position:absolute;left:562px;top:780px;width:1156px;height:32px;background:#ffffff;"></div>
<div style="position:absolute;left:562px;top:779px;width:1156px;height:1px;background:#d4d4d4;"></div>
<div style="position:absolute;left:1048px;top:780px;width:1px;height:32px;background:#3a3a3a;"></div>
<div style="position:absolute;left:1248px;top:780px;width:1px;height:32px;background:#3a3a3a;"></div>
<div style="position:absolute;left:1348px;top:780px;width:1px;height:32px;background:#3a3a3a;"></div>
<div style="position:absolute;left:1465px;top:780px;width:1px;height:32px;background:#3a3a3a;"></div>
<div style="position:absolute;left:1615px;top:780px;width:1px;height:32px;background:#3a3a3a;"></div>
<div style="position:absolute;left:864px;top:780px;width:183px;height:32px;overflow:hidden"><div class="t" style="left:16px;top:8.65px;font-size:14px;line-height:14px;color:#222;letter-spacing:-0.1px">ая_Винтовая_СВС_по_ТУ_</div></div>
<div style="position:absolute;left:1049px;top:780px;width:199px;height:32px;overflow:hidden"><div class="t" style="left:16px;top:8.65px;font-size:14px;line-height:14px;color:#222;letter-spacing:-0.25px">Фундаментная плита:ADSK_</div></div>
<div class="t" style="left:1364.8px;top:788.15px;font-size:14px;line-height:14px;color:#222;font-weight:400;letter-spacing:0px;">0.0 мм</div>
<div class="t" style="left:1482px;top:789.00px;font-size:13px;line-height:13px;color:#555;font-weight:400;letter-spacing:-0.2px;">неопредел...</div>
<svg style="position:absolute;left:1582px;top:791px;" width="10" height="5" viewBox="0 0 10 5"><path d="M0 0h10L5 5z" fill="#555"/></svg>
<div style="position:absolute;left:1482px;top:807px;width:117px;height:1px;background:#666;"></div>
<div class="t" style="left:1632px;top:786.96px;font-size:16px;line-height:16px;color:#222;font-weight:400;letter-spacing:0px;">0</div>
<div style="position:absolute;left:1632px;top:807px;width:86px;height:1px;background:#666;"></div>
<div style="position:absolute;left:562px;top:780px;width:64px;height:31px;background:#ffffff;"></div>
<div style="position:absolute;left:582.5px;top:786.5px;width:12px;height:12px;border-radius:2px;border:1.5px solid #6a6a6a;background:#fff"></div>
<div style="position:absolute;left:562px;top:812px;width:1156px;height:32px;background:#efefef;"></div>
<div style="position:absolute;left:562px;top:811px;width:1156px;height:1px;background:#d4d4d4;"></div>
<div style="position:absolute;left:1048px;top:812px;width:1px;height:32px;background:#3a3a3a;"></div>
<div style="position:absolute;left:1248px;top:812px;width:1px;height:32px;background:#3a3a3a;"></div>
<div style="position:absolute;left:1348px;top:812px;width:1px;height:32px;background:#3a3a3a;"></div>
<div style="position:absolute;left:1465px;top:812px;width:1px;height:32px;background:#3a3a3a;"></div>
<div style="position:absolute;left:1615px;top:812px;width:1px;height:32px;background:#3a3a3a;"></div>
<div style="position:absolute;left:864px;top:812px;width:183px;height:32px;overflow:hidden"><div class="t" style="left:16px;top:8.65px;font-size:14px;line-height:14px;color:#222;letter-spacing:-0.1px">ая_Винтовая_СВС_по_ТУ_</div></div>
<div style="position:absolute;left:1049px;top:812px;width:199px;height:32px;overflow:hidden"><div class="t" style="left:16px;top:8.65px;font-size:14px;line-height:14px;color:#222;letter-spacing:-0.25px">Фундаментная плита:ADSK_</div></div>
<div class="t" style="left:1364.8px;top:820.15px;font-size:14px;line-height:14px;color:#222;font-weight:400;letter-spacing:0px;">0.0 мм</div>
<div class="t" style="left:1482px;top:821.00px;font-size:13px;line-height:13px;color:#555;font-weight:400;letter-spacing:-0.2px;">неопредел...</div>
<svg style="position:absolute;left:1582px;top:823px;" width="10" height="5" viewBox="0 0 10 5"><path d="M0 0h10L5 5z" fill="#555"/></svg>
<div style="position:absolute;left:1482px;top:839px;width:117px;height:1px;background:#666;"></div>
<div class="t" style="left:1632px;top:818.96px;font-size:16px;line-height:16px;color:#222;font-weight:400;letter-spacing:0px;">0</div>
<div style="position:absolute;left:1632px;top:839px;width:86px;height:1px;background:#666;"></div>
<div style="position:absolute;left:562px;top:812px;width:64px;height:31px;background:#efefef;"></div>
<div style="position:absolute;left:582.5px;top:818.5px;width:12px;height:12px;border-radius:2px;border:1.5px solid #6a6a6a;background:#fff"></div>
<div style="position:absolute;left:860px;top:556px;width:187px;height:30px;border:1px solid #22dd22;border-left:none"></div>
<div style="position:absolute;left:1048px;top:556px;width:199px;height:30px;border:1px solid #e6e600"></div>
<div style="position:absolute;left:582.5px;top:530.5px;width:12px;height:12px;border-radius:2px;border:1.5px solid #6a6a6a;background:#fff"></div>
<div style="position:absolute;left:582px;top:498px;width:16px;height:16px;border-radius:2px;background:#3a93b0"></div>
<div style="position:absolute;left:586px;top:505px;width:8px;height:2px;background:#e8f2f5;"></div>
<div style="position:absolute;left:626px;top:492px;width:1px;height:340px;background:#cfcfcf;"></div>
<div style="position:absolute;left:628px;top:386px;width:256px;height:446px;background:#555;box-shadow:0 0 8px 2px rgba(0,0,0,0.35)"></div>
<div style="position:absolute;left:636px;top:394px;width:240px;height:432px;background:#efefef;border-radius:5px"></div>
<div class="t" style="left:652.3px;top:411.00px;font-size:13px;line-height:13px;color:#555;font-weight:400;letter-spacing:-0.2px;">Применить к группе</div>
<div style="position:absolute;left:839px;top:409px;width:18px;height:18px;border-radius:2.5px;background:#2b2b2b"></div>
<svg style="position:absolute;left:839px;top:409px;" width="18" height="18" viewBox="0 0 18 18"><path d="M4 9.2L7.4 12.6 14.2 5.4" stroke="#fff" stroke-width="1.9" fill="none"/></svg>
<div style="position:absolute;left:636px;top:442px;width:240px;height:1px;background:#c9c9c9;"></div>
<div class="t" style="left:652.3px;top:460.20px;font-size:13px;line-height:13px;color:#555;font-weight:400;letter-spacing:-0.4px;">Сбросить все выделенные коллизии</div>
<div class="t" style="left:652.3px;top:508.20px;font-size:13px;line-height:13px;color:#555;font-weight:400;letter-spacing:-0.4px;">Изменить статус 3 коллизий</div>
<div class="t" style="left:652.3px;top:556.20px;font-size:13px;line-height:13px;color:#555;font-weight:400;letter-spacing:-0.4px;">Создать задачу из 3 коллизий</div>
<div class="t" style="left:652.3px;top:604.20px;font-size:13px;line-height:13px;color:#555;font-weight:400;letter-spacing:-0.4px;">Добавить к задаче 3 коллизии</div>
<div class="t" style="left:652.3px;top:652.20px;font-size:13px;line-height:13px;color:#555;font-weight:400;letter-spacing:-0.4px;">Создать группу из 3 коллизий</div>
<div class="t" style="left:652.3px;top:700.20px;font-size:13px;line-height:13px;color:#555;font-weight:400;letter-spacing:-0.4px;">Добавить к группе 3 коллизии</div>
<div class="t" style="left:652.3px;top:748.20px;font-size:13px;line-height:13px;color:#555;font-weight:400;letter-spacing:-0.4px;">Изменить заметку у 3 коллизий</div>
<div class="t" style="left:652.3px;top:796.20px;font-size:13px;line-height:13px;color:#555;font-weight:400;letter-spacing:-0.4px;">Сохранить вид 3 коллизий</div>
<svg style="position:absolute;left:0;top:0" width="1719" height="832" viewBox="0 0 1719 832"><defs><filter id="sh" x="-20%" y="-20%" width="140%" height="140%"><feGaussianBlur in="SourceAlpha" stdDeviation="2"/><feOffset dx="3" dy="3"/><feComponentTransfer><feFuncA type="linear" slope="0.55"/></feComponentTransfer><feMerge><feMergeNode/><feMergeNode in="SourceGraphic"/></feMerge></filter></defs><g filter="url(#sh)"><path d="M951.8 474.7L866.5 429.0" stroke="#c40000" stroke-width="4" stroke-linecap="butt"/><path d="M855.0 422.9L871.6 423.6L864.8 436.3Z" fill="#c40000"/><path d="M930.0 649.6L780.2 575.7" stroke="#c40000" stroke-width="4" stroke-linecap="butt"/><path d="M768.5 569.9L785.1 570.1L778.8 583.0Z" fill="#c40000"/><path d="M512.7 632.8L569.2 580.3" stroke="#c40000" stroke-width="4" stroke-linecap="butt"/><path d="M578.7 571.5L572.6 587.0L562.8 576.4Z" fill="#c40000"/><path d="M512.7 632.8L571.0 660.9" stroke="#c40000" stroke-width="4" stroke-linecap="butt"/><path d="M582.7 666.5L566.1 666.5L572.3 653.5Z" fill="#c40000"/><path d="M512.7 632.8L573.1 688.2" stroke="#c40000" stroke-width="4" stroke-linecap="butt"/><path d="M582.7 697.0L566.8 692.2L576.5 681.6Z" fill="#c40000"/></g></svg>
<div style="position:absolute;left:505px;top:446px;width:2px;height:27px;background:#e8e8e8;"></div>
<div style="position:absolute;left:0px;top:0px;width:1px;height:832px;background:#cfcfcf;"></div>
<div style="position:absolute;left:1718px;top:0px;width:1px;height:832px;background:#cfcfcf;"></div>
<div style="position:absolute;left:0px;top:831px;width:1719px;height:1px;background:#cfcfcf;"></div>
<div style="position:absolute;left:0px;top:0px;width:1719px;height:1px;background:#cfcfcf;"></div>
</body></html>
